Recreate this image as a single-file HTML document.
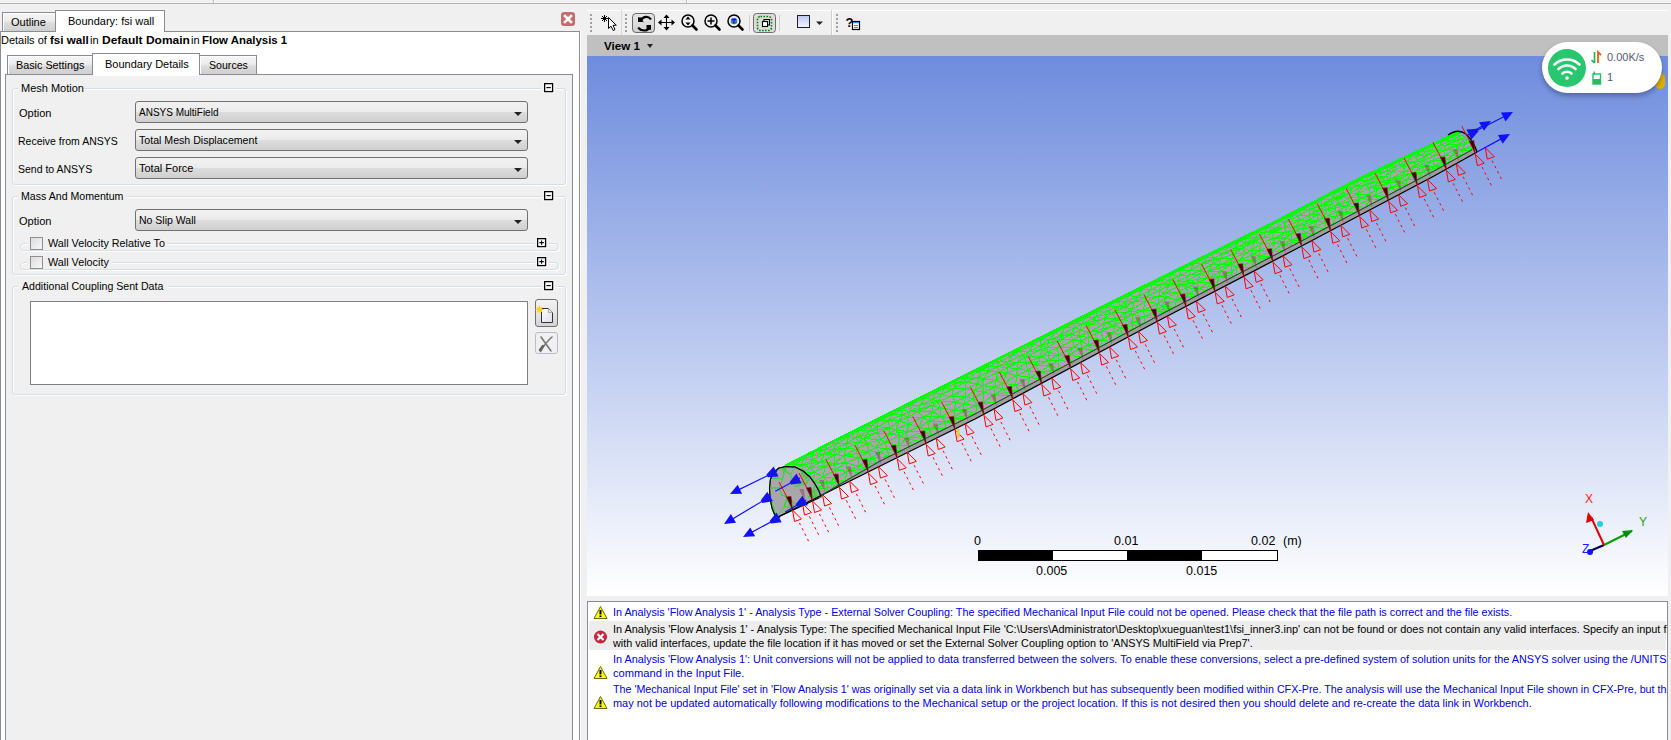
<!DOCTYPE html>
<html><head><meta charset="utf-8">
<style>
*{box-sizing:border-box}
html,body{margin:0;padding:0;width:1671px;height:740px;overflow:hidden;background:#f0f0f0;font-family:"Liberation Sans",sans-serif;font-size:11px;color:#000}
.a{position:absolute}
.t{position:absolute;white-space:nowrap;line-height:13px;font-size:11px}
.tab{position:absolute;border:1px solid #898c95;border-bottom:none;box-shadow:inset 1px 1px 0 #fff;background:linear-gradient(#f6f6f6 0%,#ececec 45%,#dcdcdc 55%,#cfcfcf 100%)}
.tabon{position:absolute;border:1px solid #898c95;border-bottom:none;background:#fff}
.grp{position:absolute;border:1px solid #d3dde6;border-radius:3px;box-shadow:inset 1px 1px 0 #fff,1px 1px 0 #fff}
.combo{position:absolute;border:1px solid #707070;border-radius:3px;background:linear-gradient(#f2f2f2 0%,#ebebeb 48%,#dddddd 52%,#cfcfcf 100%)}
.arr{position:absolute;width:0;height:0;border-left:4px solid transparent;border-right:4px solid transparent;border-top:4px solid #222}
.pm{position:absolute;width:10px;height:10px;border:2px solid #000;background:#fff}
.msg{position:absolute;white-space:nowrap;font-size:10.8px;line-height:14px}
.sc{position:absolute;white-space:nowrap;font-size:12.5px;line-height:14px;color:#000}
.cb{position:absolute;width:13px;height:13px;border:1px solid #8f8f8f;background:linear-gradient(135deg,#dcdcdc,#f7f7f7)}
</style></head>
<body>
<!-- top strip -->
<div class="a" style="left:0;top:3px;width:1671px;height:1px;background:#b3b3b3"></div><div class="a" style="left:0;top:2px;width:1671px;height:1px;background:#f5f5f5"></div>
<div class="a" style="left:213px;top:0;width:1px;height:3px;background:#b8b8b8"></div><div class="a" style="left:214px;top:0;width:1px;height:3px;background:#fff"></div>
<div class="a" style="left:686px;top:0;width:1px;height:3px;background:#b8b8b8"></div><div class="a" style="left:687px;top:0;width:1px;height:3px;background:#fff"></div>

<!-- LEFT PANEL -->
<div class="tab" style="left:2px;top:12px;width:54px;height:19px"></div>
<div class="t" style="left:11px;top:16px;font-size:11px">Outline</div>
<div class="tabon" style="left:55px;top:10px;width:110px;height:22px"></div>
<div class="t" style="left:68px;top:15px;font-size:11px">Boundary: fsi wall</div>
<div class="a" style="left:0;top:31px;width:580px;height:709px;border:1px solid #898c95;border-bottom:none;background:#fff"></div>
<div class="a" style="left:56px;top:31px;width:108px;height:2px;background:#fff"></div>
<div class="t" style="left:1px;top:34px">Details of</div><div class="t" style="left:50px;top:34px;font-weight:bold;transform:scaleX(1.055);transform-origin:0 0">fsi wall</div><div class="t" style="left:90px;top:34px">in</div><div class="t" style="left:101.5px;top:34px;font-weight:bold;transform:scaleX(1.089);transform-origin:0 0">Default Domain</div><div class="t" style="left:191px;top:34px">in</div><div class="t" style="left:202px;top:34px;font-weight:bold;transform:scaleX(1.037);transform-origin:0 0">Flow Analysis 1</div>

<div class="a" style="left:580px;top:31px;width:1px;height:709px;background:#fff"></div>
<!-- close button -->
<div class="a" style="left:561px;top:12px;width:14px;height:14px;border-radius:3px;background:#c56d6d"></div>
<svg class="a" style="left:561px;top:12px" width="14" height="14"><path d="M4 4L10 10M10 4L4 10" stroke="#fff" stroke-width="2.6" stroke-linecap="square"/></svg>

<!-- inner tabs -->
<div class="a" style="left:5px;top:74px;width:568px;height:666px;border:1px solid #898c95;border-bottom:none;background:#f0f0f0"></div>
<div class="tab" style="left:7px;top:55px;width:86px;height:19px"></div>
<div class="t" style="left:16px;top:59px;font-size:10.8px">Basic Settings</div>
<div class="tab" style="left:199px;top:55px;width:58px;height:19px"></div>
<div class="t" style="left:209px;top:59px;font-size:10.6px">Sources</div>
<div class="tabon" style="left:92px;top:53px;width:108px;height:22px"></div>
<div class="a" style="left:93px;top:74px;width:106px;height:2px;background:#fff"></div>
<div class="t" style="left:105px;top:58px;font-size:11px">Boundary Details</div>

<!-- group: Mesh Motion -->
<div class="grp" style="left:12px;top:88px;width:554px;height:97px"></div>
<div class="a" style="left:18px;top:82px;width:66px;height:12px;background:#f0f0f0"></div>
<div class="t" style="left:21px;top:82px;font-size:11px">Mesh Motion</div>
<div class="a" style="left:541px;top:82px;width:15px;height:12px;background:#f0f0f0"></div>
<svg class="a" style="left:543px;top:82px" width="12" height="12"><rect x="0.5" y="0.5" width="10.2" height="10.2" fill="none" stroke="#fff"/><rect x="1.6" y="1.6" width="8" height="8" fill="#fafafa" stroke="#000" stroke-width="1.3"/><path d="M3.4 5.6H7.8" stroke="#000" stroke-width="1.1"/></svg>

<div class="t" style="left:19px;top:107px;font-size:11px">Option</div>
<div class="combo" style="left:135px;top:101px;width:393px;height:22px"></div>
<div class="t" style="left:139px;top:106px;font-size:10px">ANSYS MultiField</div>
<div class="arr" style="left:514px;top:112px"></div>

<div class="t" style="left:18px;top:135px;font-size:10.5px">Receive from ANSYS</div>
<div class="combo" style="left:135px;top:129px;width:393px;height:22px"></div>
<div class="t" style="left:139px;top:134px;font-size:10.6px">Total Mesh Displacement</div>
<div class="arr" style="left:514px;top:140px"></div>

<div class="t" style="left:18px;top:163px;font-size:10.5px">Send to ANSYS</div>
<div class="combo" style="left:135px;top:157px;width:393px;height:22px"></div>
<div class="t" style="left:139px;top:162px;font-size:11px">Total Force</div>
<div class="arr" style="left:514px;top:168px"></div>

<!-- group: Mass And Momentum -->
<div class="grp" style="left:12px;top:196px;width:554px;height:79px"></div>
<div class="a" style="left:18px;top:190px;width:108px;height:12px;background:#f0f0f0"></div>
<div class="t" style="left:21px;top:190px;font-size:10.6px">Mass And Momentum</div>
<div class="a" style="left:541px;top:190px;width:15px;height:12px;background:#f0f0f0"></div>
<svg class="a" style="left:543px;top:190px" width="12" height="12"><rect x="0.5" y="0.5" width="10.2" height="10.2" fill="none" stroke="#fff"/><rect x="1.6" y="1.6" width="8" height="8" fill="#fafafa" stroke="#000" stroke-width="1.3"/><path d="M3.4 5.6H7.8" stroke="#000" stroke-width="1.1"/></svg>

<div class="t" style="left:19px;top:215px;font-size:11px">Option</div>
<div class="combo" style="left:135px;top:209px;width:393px;height:22px"></div>
<div class="t" style="left:139px;top:214px;font-size:10.5px">No Slip Wall</div>
<div class="arr" style="left:514px;top:220px"></div>

<div class="grp" style="left:20px;top:243px;width:539px;height:8px;border-radius:4px"></div>
<div class="a" style="left:27px;top:236px;width:140px;height:10px;background:#f0f0f0"></div>
<div class="cb" style="left:30px;top:237px"></div>
<div class="t" style="left:48px;top:237px;font-size:10.8px">Wall Velocity Relative To</div>
<div class="a" style="left:534px;top:236px;width:15px;height:12px;background:#f0f0f0"></div>
<svg class="a" style="left:536px;top:237px" width="12" height="12"><rect x="0.5" y="0.5" width="10.2" height="10.2" fill="none" stroke="#fff"/><rect x="1.6" y="1.6" width="8" height="8" fill="#fafafa" stroke="#000" stroke-width="1.3"/><path d="M3.4 5.6H7.8M5.6 3.4V7.8" stroke="#000" stroke-width="1.1"/></svg>

<div class="grp" style="left:20px;top:262px;width:539px;height:8px;border-radius:4px"></div>
<div class="a" style="left:27px;top:255px;width:85px;height:10px;background:#f0f0f0"></div>
<div class="cb" style="left:30px;top:256px"></div>
<div class="t" style="left:48px;top:256px;font-size:10.8px">Wall Velocity</div>
<div class="a" style="left:534px;top:255px;width:15px;height:12px;background:#f0f0f0"></div>
<svg class="a" style="left:536px;top:256px" width="12" height="12"><rect x="0.5" y="0.5" width="10.2" height="10.2" fill="none" stroke="#fff"/><rect x="1.6" y="1.6" width="8" height="8" fill="#fafafa" stroke="#000" stroke-width="1.3"/><path d="M3.4 5.6H7.8M5.6 3.4V7.8" stroke="#000" stroke-width="1.1"/></svg>

<!-- group: Additional Coupling Sent Data -->
<div class="grp" style="left:12px;top:286px;width:554px;height:109px"></div>
<div class="a" style="left:18px;top:280px;width:150px;height:12px;background:#f0f0f0"></div>
<div class="t" style="left:22px;top:280px;font-size:10.6px">Additional Coupling Sent Data</div>
<div class="a" style="left:541px;top:280px;width:15px;height:12px;background:#f0f0f0"></div>
<svg class="a" style="left:543px;top:280px" width="12" height="12"><rect x="0.5" y="0.5" width="10.2" height="10.2" fill="none" stroke="#fff"/><rect x="1.6" y="1.6" width="8" height="8" fill="#fafafa" stroke="#000" stroke-width="1.3"/><path d="M3.4 5.6H7.8" stroke="#000" stroke-width="1.1"/></svg>
<div class="a" style="left:30px;top:301px;width:498px;height:84px;border:1px solid #7a7f88;background:#fff"></div>
<div class="a" style="left:535px;top:299px;width:23px;height:28px;border:1px solid #6f6f6f;border-radius:3px;background:linear-gradient(#f2f2f2 0%,#e6e6e6 50%,#d4d4d4 100%)"></div>
<div class="a" style="left:535px;top:332px;width:23px;height:22px;border:1px solid #b9bec4;border-radius:3px;background:#f0f0f0"></div>

<svg class="a" style="left:535px;top:299px" width="24" height="56" viewBox="535 299 24 56">
 <defs><linearGradient id="pg" x1="0" y1="0" x2="1" y2="1"><stop offset="0" stop-color="#ffffff"/><stop offset="1" stop-color="#dcdcf0"/></linearGradient></defs>
 <path d="M541.5 308.5 H548.5 L552.5 312.5 V322.5 H541.5 Z" fill="url(#pg)" stroke="#333" stroke-width="1"/>
 <path d="M548.5 308.5 V312.5 H552.5" fill="#eee" stroke="#999" stroke-width="0.8"/>
 <circle cx="539.5" cy="309.5" r="2.6" fill="#ffe000"/>
 <path d="M539.5 305.5V313.5M535.5 309.5H543.5M536.7 306.7L542.3 312.3M542.3 306.7L536.7 312.3" stroke="#ffd000" stroke-width="0.9"/>
 <path d="M541 337 L551 351 M552 337 Q546 342 540.5 351.5" stroke="#777" stroke-width="1.6" fill="none" stroke-linecap="round"/>
 <path d="M540 350 L543 346" stroke="#666" stroke-width="2.6" stroke-linecap="round"/>
</svg>
<!-- RIGHT AREA -->
<div class="a" style="left:587px;top:10px;width:1081px;height:1px;background:#fff"></div>

<!-- toolbar -->
<svg class="a" style="left:587px;top:10px" width="290" height="26" viewBox="587 10 290 26">
 <g fill="#a0a0a0"><rect x="590" y="14" width="2" height="2"/><rect x="590" y="18" width="2" height="2"/><rect x="590" y="22" width="2" height="2"/><rect x="590" y="26" width="2" height="2"/><rect x="590" y="30" width="2" height="2"/>
 <rect x="625" y="14" width="2" height="2"/><rect x="625" y="18" width="2" height="2"/><rect x="625" y="22" width="2" height="2"/><rect x="625" y="26" width="2" height="2"/><rect x="625" y="30" width="2" height="2"/>
 <rect x="836" y="14" width="2" height="2"/><rect x="836" y="18" width="2" height="2"/><rect x="836" y="22" width="2" height="2"/><rect x="836" y="26" width="2" height="2"/><rect x="836" y="30" width="2" height="2"/></g>
 <rect x="621" y="10" width="1" height="25" fill="#d8d8d8"/>
 <rect x="831" y="10" width="1" height="25" fill="#cfcfcf"/><rect x="832" y="10" width="1" height="25" fill="#ffffff"/>
 <rect x="749" y="15" width="1" height="16" fill="#d0d0d0"/>
 <rect x="779" y="15" width="1" height="16" fill="#d0d0d0"/>
 <!-- select -->
 <g shape-rendering="crispEdges" fill="#000"><rect x="604" y="15" width="1" height="7"/><rect x="601" y="18" width="7" height="1"/><rect x="602" y="16" width="1" height="1"/><rect x="603" y="17" width="1" height="1"/><rect x="606" y="16" width="1" height="1"/><rect x="605" y="17" width="1" height="1"/><rect x="602" y="20" width="1" height="1"/><rect x="603" y="19" width="1" height="1"/><rect x="606" y="20" width="1" height="1"/><rect x="605" y="19" width="1" height="1"/><rect x="603" y="17" width="3" height="3"/></g>
 <path d="M608.5 17.5 L608.5 28.5 L611 26.2 L613.2 30.5 L615 29.6 L613 25.3 L616.3 25.2 Z" fill="#fff" stroke="#000" stroke-width="1"/>
 <!-- rotate pressed -->
 <defs><linearGradient id="pbg" x1="0" y1="0" x2="0" y2="1"><stop offset="0" stop-color="#e6e6e6"/><stop offset="0.5" stop-color="#dedede"/><stop offset="1" stop-color="#cfcfcf"/></linearGradient></defs>
 <rect x="632.5" y="13.5" width="22" height="19" rx="3.5" fill="url(#pbg)" stroke="#6a6a6a"/>
 <path d="M641 20.5 Q643 16.5 646.5 16.8 Q649.5 17 651 19.5" stroke="#000" stroke-width="2.2" fill="none"/>
 <path d="M638 17.5 H642.5 V22 H638 Z" fill="#000"/><path d="M638 17.5 L643.5 22" stroke="#000" stroke-width="1"/>
 <path d="M638.2 27.5 Q640 30.5 644.5 30.5 Q648 30.5 649.5 27" stroke="#000" stroke-width="2.2" fill="none"/>
 <path d="M646.5 25 H651 V29.8 H646.5 Z" fill="#000"/>
 <!-- pan -->
 <path d="M666.5 15.5V29.5M659 22.5H674" stroke="#000" stroke-width="1.1"/>
 <path d="M666.5 14.5L663.5 18H669.5Z M666.5 30.5L663.5 27H669.5Z M658 22.5L661.5 19.5V25.5Z M675 22.5L671.5 19.5V25.5Z" fill="#000"/>
 <!-- zoom icons -->
 <g fill="none" stroke="#000" stroke-width="1.5"><circle cx="688" cy="21" r="6"/><circle cx="711" cy="21" r="6"/><circle cx="734" cy="21" r="6"/></g>
 <g stroke="#000" stroke-width="2.6" stroke-linecap="round"><path d="M692.5 25.5L696.5 29.5M715.5 25.5L719.5 29.5M738.5 25.5L742.5 29.5"/></g>
 <path d="M688 16.5L685.5 19.5H690.5Z M688 25.5L685.5 22.5H690.5Z" fill="#000"/>
 <path d="M711 17.5V24.5M707.5 21H714.5" stroke="#000" stroke-width="1.5"/>
 <circle cx="734" cy="21" r="3.3" fill="#3a78e0"/><path d="M732 19.5H736M734 19.5V23.5" stroke="#102050" stroke-width="1.2"/>
 <!-- fit pressed -->
 <rect x="753.5" y="13.5" width="22" height="19" rx="3" fill="#dcdcdc" stroke="#6c6c6c"/>
 <rect x="757.5" y="16.5" width="14" height="14" rx="3" fill="none" stroke="#008000" stroke-width="1.6" stroke-dasharray="1.6 1.4"/>
 <rect x="762.5" y="21.5" width="5" height="5" fill="#fff" stroke="#000" stroke-width="1.1"/>
 <path d="M764 21.5V19.5H769.5V25H767.5" fill="none" stroke="#000" stroke-width="1.1"/>
 <!-- color square -->
 <defs><linearGradient id="bsq" x1="0" y1="0" x2="0" y2="1"><stop offset="0" stop-color="#b8c8f0"/><stop offset="1" stop-color="#f4f6ff"/></linearGradient></defs>
 <rect x="797.5" y="15.5" width="12" height="12" fill="url(#bsq)" stroke="#202020"/>
 <path d="M816 21.5H823L819.5 25Z" fill="#222"/>
 <!-- help -->
 <text x="845.5" y="26.5" font-family="Liberation Sans" font-weight="bold" font-size="13" fill="#000">?</text>
 <rect x="852.5" y="21.5" width="7" height="8" fill="#fff" stroke="#000" stroke-width="1.2"/>
 <rect x="853" y="22" width="6" height="1.2" fill="#1e90ff"/>
 <path d="M854 25.5H858M854 27.5H858" stroke="#555" stroke-width="0.8"/>
</svg>
<div class="a" style="left:587px;top:35px;width:1081px;height:21px;background:#c0c0c0"></div>
<div class="t" style="left:604px;top:39px;font-weight:bold;font-size:11.6px">View 1</div>
<div class="arr" style="left:647px;top:44px;border-left-width:3.5px;border-right-width:3.5px;border-top-width:4px"></div>
<div id="vp" class="a" style="left:587px;top:56px;width:1081px;height:540px;background:linear-gradient(#6e8cde 0%,#ffffff 100%)"></div>
<!--MODEL--><svg class="a" style="left:587px;top:56px" width="1081" height="540" viewBox="587 56 1081 540"><polygon points="783.0,467.0 870.0,422.0 1000.0,357.0 1156.0,279.3 1267.0,225.0 1361.0,177.0 1455.0,133.0 1462.0,134.0 1472.0,142.0 1477.0,152.0 1477.0,152.0 1434.0,176.0 1294.0,250.0 1156.0,322.0 975.0,419.0 850.0,481.0 776.0,518.0 771.0,505.0 769.0,492.0 771.0,480.0 777.0,471.0" fill="#a9a6ae"/><polygon points="821.0,495.5 835.0,487.2 850.0,478.4 880.0,461.1 920.0,441.3 975.0,414.0 1156.0,317.0 1294.0,245.0 1434.0,171.0 1472.0,149.8 1477.0,152.0 1434.0,176.0 1294.0,250.0 1156.0,322.0 975.0,419.0 850.0,481.0 821.0,495.5" fill="#9c9ba0"/><path d="M785.0 465.0L793.2 460.9 M785.0 465.0L793.4 464.7 M785.0 465.0L803.8 458.8 M793.4 464.7L803.8 458.8 M793.4 464.7L791.6 470.6 M793.4 464.7L801.8 465.0 M791.6 470.6L801.8 465.0 M791.6 470.6L802.7 472.6 M802.7 472.6L810.5 467.7 M802.7 472.6L801.4 478.9 M802.7 472.6L814.2 472.1 M802.7 472.6L814.2 472.1 M801.4 478.9L814.2 472.1 M801.4 478.9L813.7 481.8 M813.7 481.8L823.0 477.0 M813.7 481.8L814.2 489.7 M813.7 481.8L828.1 482.6 M814.2 489.7L828.1 482.6 M814.2 489.7L826.3 492.4 M814.2 489.7L836.3 486.5 M826.3 492.4L836.3 486.5 M793.2 460.9L809.6 452.5 M793.2 460.9L803.8 458.8 M793.2 460.9L793.4 464.7 M803.8 458.8L813.1 455.7 M803.8 458.8L801.8 465.0 M803.8 458.8L811.9 460.0 M803.8 458.8L811.9 460.0 M801.8 465.0L811.9 460.0 M801.8 465.0L810.5 467.7 M801.8 465.0L802.7 472.6 M801.8 465.0L821.2 461.7 M810.5 467.7L821.2 461.7 M810.5 467.7L814.2 472.1 M810.5 467.7L825.0 466.4 M810.5 467.7L825.0 466.4 M814.2 472.1L825.0 466.4 M814.2 472.1L823.0 477.0 M814.2 472.1L813.7 481.8 M823.0 477.0L835.9 469.8 M823.0 477.0L828.1 482.6 M823.0 477.0L835.2 478.4 M828.1 482.6L835.2 478.4 M828.1 482.6L836.3 486.5 M828.1 482.6L826.3 492.4 M828.1 482.6L844.9 481.4 M836.3 486.5L844.9 481.4 M809.6 452.5L814.9 449.9 M809.6 452.5L813.1 455.7 M809.6 452.5L803.8 458.8 M809.6 452.5L824.6 449.4 M813.1 455.7L824.6 449.4 M813.1 455.7L811.9 460.0 M813.1 455.7L823.9 454.2 M813.1 455.7L823.9 454.2 M811.9 460.0L823.9 454.2 M811.9 460.0L821.2 461.7 M811.9 460.0L810.5 467.7 M821.2 461.7L835.1 454.7 M821.2 461.7L825.0 466.4 M821.2 461.7L834.1 463.4 M821.2 461.7L834.1 463.4 M825.0 466.4L834.1 463.4 M825.0 466.4L835.9 469.8 M825.0 466.4L823.0 477.0 M825.0 466.4L846.2 462.7 M835.9 469.8L846.2 462.7 M835.9 469.8L835.2 478.4 M835.9 469.8L847.0 471.5 M835.9 469.8L847.0 471.5 M835.2 478.4L847.0 471.5 M835.2 478.4L844.9 481.4 M835.2 478.4L836.3 486.5 M844.9 481.4L860.3 472.4 M814.9 449.9L829.8 442.3 M814.9 449.9L824.6 449.4 M814.9 449.9L813.1 455.7 M824.6 449.4L836.4 444.0 M824.6 449.4L823.9 454.2 M824.6 449.4L833.0 449.7 M824.6 449.4L833.0 449.7 M823.9 454.2L833.0 449.7 M823.9 454.2L835.1 454.7 M823.9 454.2L821.2 461.7 M823.9 454.2L846.3 448.0 M835.1 454.7L846.3 448.0 M835.1 454.7L834.1 463.4 M835.1 454.7L844.1 455.5 M834.1 463.4L844.1 455.5 M834.1 463.4L846.2 462.7 M834.1 463.4L835.9 469.8 M846.2 462.7L858.1 457.9 M846.2 462.7L847.0 471.5 M846.2 462.7L858.5 466.2 M847.0 471.5L858.5 466.2 M847.0 471.5L860.3 472.4 M847.0 471.5L844.9 481.4 M847.0 471.5L867.5 468.1 M860.3 472.4L867.5 468.1 M829.8 442.3L840.5 436.9 M829.8 442.3L836.4 444.0 M829.8 442.3L824.6 449.4 M829.8 442.3L848.5 437.0 M836.4 444.0L848.5 437.0 M836.4 444.0L833.0 449.7 M836.4 444.0L846.6 443.6 M833.0 449.7L846.6 443.6 M833.0 449.7L846.3 448.0 M833.0 449.7L835.1 454.7 M846.3 448.0L858.8 442.3 M846.3 448.0L844.1 455.5 M846.3 448.0L856.0 449.2 M846.3 448.0L856.0 449.2 M844.1 455.5L856.0 449.2 M844.1 455.5L858.1 457.9 M844.1 455.5L846.2 462.7 M844.1 455.5L868.6 451.8 M858.1 457.9L868.6 451.8 M858.1 457.9L858.5 466.2 M858.1 457.9L871.5 458.6 M858.5 466.2L871.5 458.6 M858.5 466.2L867.5 468.1 M858.5 466.2L860.3 472.4 M858.5 466.2L877.9 462.2 M867.5 468.1L877.9 462.2 M840.5 436.9L849.4 432.4 M840.5 436.9L848.5 437.0 M840.5 436.9L836.4 444.0 M848.5 437.0L858.9 430.7 M848.5 437.0L846.6 443.6 M848.5 437.0L856.2 437.1 M846.6 443.6L856.2 437.1 M846.6 443.6L858.8 442.3 M846.6 443.6L846.3 448.0 M858.8 442.3L863.7 438.7 M858.8 442.3L856.0 449.2 M858.8 442.3L867.5 443.5 M856.0 449.2L867.5 443.5 M856.0 449.2L868.6 451.8 M856.0 449.2L858.1 457.9 M868.6 451.8L875.9 447.3 M868.6 451.8L871.5 458.6 M868.6 451.8L879.4 452.1 M871.5 458.6L879.4 452.1 M871.5 458.6L877.9 462.2 M871.5 458.6L867.5 468.1 M871.5 458.6L889.5 456.4 M877.9 462.2L889.5 456.4 M849.4 432.4L861.3 426.4 M849.4 432.4L858.9 430.7 M849.4 432.4L848.5 437.0 M858.9 430.7L872.3 425.5 M858.9 430.7L856.2 437.1 M858.9 430.7L869.7 430.6 M858.9 430.7L869.7 430.6 M856.2 437.1L869.7 430.6 M856.2 437.1L863.7 438.7 M856.2 437.1L858.8 442.3 M856.2 437.1L876.9 432.9 M863.7 438.7L876.9 432.9 M863.7 438.7L867.5 443.5 M863.7 438.7L880.9 439.4 M867.5 443.5L880.9 439.4 M867.5 443.5L875.9 447.3 M867.5 443.5L868.6 451.8 M875.9 447.3L885.5 441.8 M875.9 447.3L879.4 452.1 M875.9 447.3L886.7 449.0 M879.4 452.1L886.7 449.0 M879.4 452.1L889.5 456.4 M879.4 452.1L877.9 462.2 M889.5 456.4L900.3 451.1 M861.3 426.4L872.4 420.8 M861.3 426.4L872.3 425.5 M861.3 426.4L858.9 430.7 M872.3 425.5L878.1 421.0 M872.3 425.5L869.7 430.6 M872.3 425.5L877.9 426.6 M869.7 430.6L877.9 426.6 M869.7 430.6L876.9 432.9 M869.7 430.6L863.7 438.7 M869.7 430.6L889.9 428.1 M876.9 432.9L889.9 428.1 M876.9 432.9L880.9 439.4 M876.9 432.9L889.4 433.8 M876.9 432.9L889.4 433.8 M880.9 439.4L889.4 433.8 M880.9 439.4L885.5 441.8 M880.9 439.4L875.9 447.3 M885.5 441.8L900.2 436.1 M885.5 441.8L886.7 449.0 M885.5 441.8L898.0 445.7 M886.7 449.0L898.0 445.7 M886.7 449.0L900.3 451.1 M886.7 449.0L889.5 456.4 M900.3 451.1L912.6 445.0 M872.4 420.8L885.0 414.5 M872.4 420.8L878.1 421.0 M872.4 420.8L872.3 425.5 M872.4 420.8L892.8 414.4 M878.1 421.0L892.8 414.4 M878.1 421.0L877.9 426.6 M878.1 421.0L888.1 420.9 M877.9 426.6L888.1 420.9 M877.9 426.6L889.9 428.1 M877.9 426.6L876.9 432.9 M889.9 428.1L899.2 421.0 M889.9 428.1L889.4 433.8 M889.9 428.1L895.6 429.7 M889.4 433.8L895.6 429.7 M889.4 433.8L900.2 436.1 M889.4 433.8L885.5 441.8 M889.4 433.8L907.3 431.5 M900.2 436.1L907.3 431.5 M900.2 436.1L898.0 445.7 M900.2 436.1L906.3 438.5 M900.2 436.1L906.3 438.5 M898.0 445.7L906.3 438.5 M898.0 445.7L912.6 445.0 M898.0 445.7L900.3 451.1 M912.6 445.0L919.4 441.6 M885.0 414.5L891.1 411.4 M885.0 414.5L892.8 414.4 M885.0 414.5L878.1 421.0 M892.8 414.4L900.4 409.8 M892.8 414.4L888.1 420.9 M892.8 414.4L902.7 414.8 M892.8 414.4L902.7 414.8 M888.1 420.9L902.7 414.8 M888.1 420.9L899.2 421.0 M888.1 420.9L889.9 428.1 M899.2 421.0L907.4 417.4 M899.2 421.0L895.6 429.7 M899.2 421.0L908.4 423.8 M895.6 429.7L908.4 423.8 M895.6 429.7L907.3 431.5 M895.6 429.7L900.2 436.1 M907.3 431.5L919.0 427.3 M907.3 431.5L906.3 438.5 M907.3 431.5L923.7 431.4 M907.3 431.5L923.7 431.4 M906.3 438.5L923.7 431.4 M906.3 438.5L919.4 441.6 M906.3 438.5L912.6 445.0 M906.3 438.5L932.0 435.3 M919.4 441.6L932.0 435.3 M891.1 411.4L901.9 406.1 M891.1 411.4L900.4 409.8 M891.1 411.4L892.8 414.4 M900.4 409.8L910.1 405.6 M900.4 409.8L902.7 414.8 M900.4 409.8L910.2 411.6 M902.7 414.8L910.2 411.6 M902.7 414.8L907.4 417.4 M902.7 414.8L899.2 421.0 M907.4 417.4L917.8 411.6 M907.4 417.4L908.4 423.8 M907.4 417.4L923.1 417.0 M907.4 417.4L923.1 417.0 M908.4 423.8L923.1 417.0 M908.4 423.8L919.0 427.3 M908.4 423.8L907.3 431.5 M919.0 427.3L929.1 421.3 M919.0 427.3L923.7 431.4 M919.0 427.3L928.7 429.1 M923.7 431.4L928.7 429.1 M923.7 431.4L932.0 435.3 M923.7 431.4L919.4 441.6 M932.0 435.3L945.5 428.6 M901.9 406.1L917.5 398.3 M901.9 406.1L910.1 405.6 M901.9 406.1L900.4 409.8 M910.1 405.6L924.5 398.3 M910.1 405.6L910.2 411.6 M910.1 405.6L920.5 404.9 M910.2 411.6L920.5 404.9 M910.2 411.6L917.8 411.6 M910.2 411.6L907.4 417.4 M910.2 411.6L933.3 405.3 M917.8 411.6L933.3 405.3 M917.8 411.6L923.1 417.0 M917.8 411.6L932.4 411.8 M923.1 417.0L932.4 411.8 M923.1 417.0L929.1 421.3 M923.1 417.0L919.0 427.3 M923.1 417.0L940.9 416.4 M929.1 421.3L940.9 416.4 M929.1 421.3L928.7 429.1 M929.1 421.3L945.9 421.7 M928.7 429.1L945.9 421.7 M928.7 429.1L945.5 428.6 M928.7 429.1L932.0 435.3 M945.5 428.6L955.1 423.9 M917.5 398.3L928.0 393.0 M917.5 398.3L924.5 398.3 M917.5 398.3L910.1 405.6 M924.5 398.3L935.5 392.7 M924.5 398.3L920.5 404.9 M924.5 398.3L932.5 399.4 M924.5 398.3L932.5 399.4 M920.5 404.9L932.5 399.4 M920.5 404.9L933.3 405.3 M920.5 404.9L917.8 411.6 M920.5 404.9L938.5 401.3 M933.3 405.3L938.5 401.3 M933.3 405.3L932.4 411.8 M933.3 405.3L939.9 407.8 M932.4 411.8L939.9 407.8 M932.4 411.8L940.9 416.4 M932.4 411.8L929.1 421.3 M940.9 416.4L954.7 410.0 M940.9 416.4L945.9 421.7 M940.9 416.4L953.5 418.2 M945.9 421.7L953.5 418.2 M945.9 421.7L955.1 423.9 M945.9 421.7L945.5 428.6 M945.9 421.7L966.7 418.1 M955.1 423.9L966.7 418.1 M928.0 393.0L939.7 387.1 M928.0 393.0L935.5 392.7 M928.0 393.0L924.5 398.3 M928.0 393.0L944.1 388.4 M935.5 392.7L944.1 388.4 M935.5 392.7L932.5 399.4 M935.5 392.7L941.3 394.6 M932.5 399.4L941.3 394.6 M932.5 399.4L938.5 401.3 M932.5 399.4L933.3 405.3 M938.5 401.3L951.6 396.4 M938.5 401.3L939.9 407.8 M938.5 401.3L955.7 401.7 M938.5 401.3L955.7 401.7 M939.9 407.8L955.7 401.7 M939.9 407.8L954.7 410.0 M939.9 407.8L940.9 416.4 M954.7 410.0L963.4 404.6 M954.7 410.0L953.5 418.2 M954.7 410.0L964.1 410.0 M953.5 418.2L964.1 410.0 M953.5 418.2L966.7 418.1 M953.5 418.2L955.1 423.9 M953.5 418.2L975.4 413.8 M966.7 418.1L975.4 413.8 M939.7 387.1L950.3 381.8 M939.7 387.1L944.1 388.4 M939.7 387.1L935.5 392.7 M944.1 388.4L958.2 382.4 M944.1 388.4L941.3 394.6 M944.1 388.4L953.6 388.4 M944.1 388.4L953.6 388.4 M941.3 394.6L953.6 388.4 M941.3 394.6L951.6 396.4 M941.3 394.6L938.5 401.3 M951.6 396.4L965.3 388.6 M951.6 396.4L955.7 401.7 M951.6 396.4L966.1 396.8 M955.7 401.7L966.1 396.8 M955.7 401.7L963.4 404.6 M955.7 401.7L954.7 410.0 M963.4 404.6L973.0 398.8 M963.4 404.6L964.1 410.0 M963.4 404.6L977.2 405.5 M963.4 404.6L977.2 405.5 M964.1 410.0L977.2 405.5 M964.1 410.0L975.4 413.8 M964.1 410.0L966.7 418.1 M975.4 413.8L983.0 409.7 M950.3 381.8L956.4 378.8 M950.3 381.8L958.2 382.4 M950.3 381.8L944.1 388.4 M958.2 382.4L965.4 379.0 M958.2 382.4L953.6 388.4 M958.2 382.4L966.3 381.9 M953.6 388.4L966.3 381.9 M953.6 388.4L965.3 388.6 M953.6 388.4L951.6 396.4 M965.3 388.6L977.5 384.1 M965.3 388.6L966.1 396.8 M965.3 388.6L974.6 390.5 M966.1 396.8L974.6 390.5 M966.1 396.8L973.0 398.8 M966.1 396.8L963.4 404.6 M973.0 398.8L983.9 392.2 M973.0 398.8L977.2 405.5 M973.0 398.8L982.9 403.3 M973.0 398.8L982.9 403.3 M977.2 405.5L982.9 403.3 M977.2 405.5L983.0 409.7 M977.2 405.5L975.4 413.8 M983.0 409.7L996.5 402.5 M956.4 378.8L969.7 372.2 M956.4 378.8L965.4 379.0 M956.4 378.8L958.2 382.4 M965.4 379.0L980.3 370.6 M965.4 379.0L966.3 381.9 M965.4 379.0L978.7 377.2 M965.4 379.0L978.7 377.2 M966.3 381.9L978.7 377.2 M966.3 381.9L977.5 384.1 M966.3 381.9L965.3 388.6 M977.5 384.1L983.2 379.3 M977.5 384.1L974.6 390.5 M977.5 384.1L982.9 385.9 M974.6 390.5L982.9 385.9 M974.6 390.5L983.9 392.2 M974.6 390.5L973.0 398.8 M983.9 392.2L995.1 386.7 M983.9 392.2L982.9 403.3 M983.9 392.2L993.9 394.6 M983.9 392.2L993.9 394.6 M982.9 403.3L993.9 394.6 M982.9 403.3L996.5 402.5 M982.9 403.3L983.0 409.7 M996.5 402.5L1008.6 396.0 M969.7 372.2L979.5 367.3 M969.7 372.2L980.3 370.6 M969.7 372.2L965.4 379.0 M969.7 372.2L988.5 366.8 M980.3 370.6L988.5 366.8 M980.3 370.6L978.7 377.2 M980.3 370.6L989.0 371.0 M980.3 370.6L989.0 371.0 M978.7 377.2L989.0 371.0 M978.7 377.2L983.2 379.3 M978.7 377.2L977.5 384.1 M983.2 379.3L998.7 372.0 M983.2 379.3L982.9 385.9 M983.2 379.3L995.7 380.1 M983.2 379.3L995.7 380.1 M982.9 385.9L995.7 380.1 M982.9 385.9L995.1 386.7 M982.9 385.9L983.9 392.2 M995.1 386.7L1002.8 383.3 M995.1 386.7L993.9 394.6 M995.1 386.7L1002.8 389.5 M993.9 394.6L1002.8 389.5 M993.9 394.6L1008.6 396.0 M993.9 394.6L996.5 402.5 M993.9 394.6L1018.5 390.7 M1008.6 396.0L1018.5 390.7 M979.5 367.3L989.3 362.4 M979.5 367.3L988.5 366.8 M979.5 367.3L980.3 370.6 M988.5 366.8L999.6 361.5 M988.5 366.8L989.0 371.0 M988.5 366.8L997.5 366.5 M988.5 366.8L997.5 366.5 M989.0 371.0L997.5 366.5 M989.0 371.0L998.7 372.0 M989.0 371.0L983.2 379.3 M998.7 372.0L1007.1 367.8 M998.7 372.0L995.7 380.1 M998.7 372.0L1007.0 373.0 M995.7 380.1L1007.0 373.0 M995.7 380.1L1002.8 383.3 M995.7 380.1L995.1 386.7 M1002.8 383.3L1016.3 375.6 M1002.8 383.3L1002.8 389.5 M1002.8 383.3L1015.9 385.2 M1002.8 383.3L1015.9 385.2 M1002.8 389.5L1015.9 385.2 M1002.8 389.5L1018.5 390.7 M1002.8 389.5L1008.6 396.0 M1018.5 390.7L1027.4 385.9 M989.3 362.4L1002.5 355.8 M989.3 362.4L999.6 361.5 M989.3 362.4L988.5 366.8 M999.6 361.5L1012.4 355.4 M999.6 361.5L997.5 366.5 M999.6 361.5L1008.1 361.8 M997.5 366.5L1008.1 361.8 M997.5 366.5L1007.1 367.8 M997.5 366.5L998.7 372.0 M997.5 366.5L1017.7 362.3 M1007.1 367.8L1017.7 362.3 M1007.1 367.8L1007.0 373.0 M1007.1 367.8L1017.9 368.4 M1007.0 373.0L1017.9 368.4 M1007.0 373.0L1016.3 375.6 M1007.0 373.0L1002.8 383.3 M1016.3 375.6L1027.3 370.6 M1016.3 375.6L1015.9 385.2 M1016.3 375.6L1030.3 377.3 M1015.9 385.2L1030.3 377.3 M1015.9 385.2L1027.4 385.9 M1015.9 385.2L1018.5 390.7 M1027.4 385.9L1040.1 379.1 M1002.5 355.8L1015.6 349.2 M1002.5 355.8L1012.4 355.4 M1002.5 355.8L999.6 361.5 M1002.5 355.8L1019.7 351.1 M1012.4 355.4L1019.7 351.1 M1012.4 355.4L1008.1 361.8 M1012.4 355.4L1022.3 355.1 M1008.1 361.8L1022.3 355.1 M1008.1 361.8L1017.7 362.3 M1008.1 361.8L1007.1 367.8 M1017.7 362.3L1025.5 357.3 M1017.7 362.3L1017.9 368.4 M1017.7 362.3L1026.3 363.0 M1017.9 368.4L1026.3 363.0 M1017.9 368.4L1027.3 370.6 M1017.9 368.4L1016.3 375.6 M1027.3 370.6L1035.4 365.1 M1027.3 370.6L1030.3 377.3 M1027.3 370.6L1039.5 372.7 M1027.3 370.6L1039.5 372.7 M1030.3 377.3L1039.5 372.7 M1030.3 377.3L1040.1 379.1 M1030.3 377.3L1027.4 385.9 M1040.1 379.1L1050.8 373.4 M1015.6 349.2L1021.7 346.2 M1015.6 349.2L1019.7 351.1 M1015.6 349.2L1012.4 355.4 M1019.7 351.1L1033.4 344.4 M1019.7 351.1L1022.3 355.1 M1019.7 351.1L1028.3 352.2 M1019.7 351.1L1028.3 352.2 M1022.3 355.1L1028.3 352.2 M1022.3 355.1L1025.5 357.3 M1022.3 355.1L1017.7 362.3 M1025.5 357.3L1041.5 349.4 M1025.5 357.3L1026.3 363.0 M1025.5 357.3L1040.8 356.4 M1026.3 363.0L1040.8 356.4 M1026.3 363.0L1035.4 365.1 M1026.3 363.0L1027.3 370.6 M1026.3 363.0L1049.6 360.6 M1035.4 365.1L1049.6 360.6 M1035.4 365.1L1039.5 372.7 M1035.4 365.1L1049.6 365.3 M1039.5 372.7L1049.6 365.3 M1039.5 372.7L1050.8 373.4 M1039.5 372.7L1040.1 379.1 M1039.5 372.7L1058.7 369.2 M1050.8 373.4L1058.7 369.2 M1021.7 346.2L1034.8 339.7 M1021.7 346.2L1033.4 344.4 M1021.7 346.2L1019.7 351.1 M1033.4 344.4L1041.4 339.5 M1033.4 344.4L1028.3 352.2 M1033.4 344.4L1039.9 345.9 M1033.4 344.4L1039.9 345.9 M1028.3 352.2L1039.9 345.9 M1028.3 352.2L1041.5 349.4 M1028.3 352.2L1025.5 357.3 M1041.5 349.4L1047.2 347.4 M1041.5 349.4L1040.8 356.4 M1041.5 349.4L1047.7 351.8 M1040.8 356.4L1047.7 351.8 M1040.8 356.4L1049.6 360.6 M1040.8 356.4L1035.4 365.1 M1040.8 356.4L1058.5 354.8 M1049.6 360.6L1058.5 354.8 M1049.6 360.6L1049.6 365.3 M1049.6 360.6L1058.1 360.5 M1049.6 360.6L1058.1 360.5 M1049.6 365.3L1058.1 360.5 M1049.6 365.3L1058.7 369.2 M1049.6 365.3L1050.8 373.4 M1058.7 369.2L1072.5 361.7 M1034.8 339.7L1047.3 333.5 M1034.8 339.7L1041.4 339.5 M1034.8 339.7L1033.4 344.4 M1034.8 339.7L1055.9 332.1 M1041.4 339.5L1055.9 332.1 M1041.4 339.5L1039.9 345.9 M1041.4 339.5L1049.3 339.7 M1041.4 339.5L1049.3 339.7 M1039.9 345.9L1049.3 339.7 M1039.9 345.9L1047.2 347.4 M1039.9 345.9L1041.5 349.4 M1039.9 345.9L1062.0 339.1 M1047.2 347.4L1062.0 339.1 M1047.2 347.4L1047.7 351.8 M1047.2 347.4L1057.4 348.0 M1047.2 347.4L1057.4 348.0 M1047.7 351.8L1057.4 348.0 M1047.7 351.8L1058.5 354.8 M1047.7 351.8L1049.6 360.6 M1058.5 354.8L1073.1 347.8 M1058.5 354.8L1058.1 360.5 M1058.5 354.8L1067.4 355.8 M1058.1 360.5L1067.4 355.8 M1058.1 360.5L1072.5 361.7 M1058.1 360.5L1058.7 369.2 M1072.5 361.7L1082.7 356.3 M1047.3 333.5L1056.8 328.7 M1047.3 333.5L1055.9 332.1 M1047.3 333.5L1041.4 339.5 M1047.3 333.5L1065.1 327.5 M1055.9 332.1L1065.1 327.5 M1055.9 332.1L1049.3 339.7 M1055.9 332.1L1059.9 335.8 M1049.3 339.7L1059.9 335.8 M1049.3 339.7L1062.0 339.1 M1049.3 339.7L1047.2 347.4 M1049.3 339.7L1070.3 334.4 M1062.0 339.1L1070.3 334.4 M1062.0 339.1L1057.4 348.0 M1062.0 339.1L1073.4 340.3 M1057.4 348.0L1073.4 340.3 M1057.4 348.0L1073.1 347.8 M1057.4 348.0L1058.5 354.8 M1073.1 347.8L1081.5 341.1 M1073.1 347.8L1067.4 355.8 M1073.1 347.8L1081.4 348.2 M1067.4 355.8L1081.4 348.2 M1067.4 355.8L1082.7 356.3 M1067.4 355.8L1072.5 361.7 M1082.7 356.3L1093.0 350.8 M1056.8 328.7L1066.9 323.7 M1056.8 328.7L1065.1 327.5 M1056.8 328.7L1055.9 332.1 M1065.1 327.5L1074.3 323.6 M1065.1 327.5L1059.9 335.8 M1065.1 327.5L1075.3 327.1 M1059.9 335.8L1075.3 327.1 M1059.9 335.8L1070.3 334.4 M1059.9 335.8L1062.0 339.1 M1070.3 334.4L1080.1 330.5 M1070.3 334.4L1073.4 340.3 M1070.3 334.4L1078.8 336.0 M1070.3 334.4L1078.8 336.0 M1073.4 340.3L1078.8 336.0 M1073.4 340.3L1081.5 341.1 M1073.4 340.3L1073.1 347.8 M1081.5 341.1L1088.3 337.5 M1081.5 341.1L1081.4 348.2 M1081.5 341.1L1088.7 345.1 M1081.4 348.2L1088.7 345.1 M1081.4 348.2L1093.0 350.8 M1081.4 348.2L1082.7 356.3 M1093.0 350.8L1100.2 346.9 M1066.9 323.7L1079.7 317.3 M1066.9 323.7L1074.3 323.6 M1066.9 323.7L1065.1 327.5 M1074.3 323.6L1084.8 318.3 M1074.3 323.6L1075.3 327.1 M1074.3 323.6L1081.7 324.0 M1074.3 323.6L1081.7 324.0 M1075.3 327.1L1081.7 324.0 M1075.3 327.1L1080.1 330.5 M1075.3 327.1L1070.3 334.4 M1080.1 330.5L1089.7 324.9 M1080.1 330.5L1078.8 336.0 M1080.1 330.5L1089.5 332.3 M1078.8 336.0L1089.5 332.3 M1078.8 336.0L1088.3 337.5 M1078.8 336.0L1081.5 341.1 M1088.3 337.5L1101.6 331.0 M1088.3 337.5L1088.7 345.1 M1088.3 337.5L1102.4 339.8 M1088.7 345.1L1102.4 339.8 M1088.7 345.1L1100.2 346.9 M1088.7 345.1L1093.0 350.8 M1100.2 346.9L1109.6 341.8 M1079.7 317.3L1090.9 311.7 M1079.7 317.3L1084.8 318.3 M1079.7 317.3L1074.3 323.6 M1079.7 317.3L1096.5 312.4 M1084.8 318.3L1096.5 312.4 M1084.8 318.3L1081.7 324.0 M1084.8 318.3L1096.5 316.6 M1081.7 324.0L1096.5 316.6 M1081.7 324.0L1089.7 324.9 M1081.7 324.0L1080.1 330.5 M1081.7 324.0L1104.1 318.6 M1089.7 324.9L1104.1 318.6 M1089.7 324.9L1089.5 332.3 M1089.7 324.9L1105.2 323.1 M1089.5 332.3L1105.2 323.1 M1089.5 332.3L1101.6 331.0 M1089.5 332.3L1088.3 337.5 M1089.5 332.3L1115.0 325.5 M1101.6 331.0L1115.0 325.5 M1101.6 331.0L1102.4 339.8 M1101.6 331.0L1112.8 332.7 M1102.4 339.8L1112.8 332.7 M1102.4 339.8L1109.6 341.8 M1102.4 339.8L1100.2 346.9 M1109.6 341.8L1121.6 335.4 M1090.9 311.7L1097.1 308.6 M1090.9 311.7L1096.5 312.4 M1090.9 311.7L1084.8 318.3 M1096.5 312.4L1105.0 307.5 M1096.5 312.4L1096.5 316.6 M1096.5 312.4L1106.5 311.2 M1096.5 316.6L1106.5 311.2 M1096.5 316.6L1104.1 318.6 M1096.5 316.6L1089.7 324.9 M1096.5 316.6L1111.8 313.2 M1104.1 318.6L1111.8 313.2 M1104.1 318.6L1105.2 323.1 M1104.1 318.6L1116.1 318.9 M1104.1 318.6L1116.1 318.9 M1105.2 323.1L1116.1 318.9 M1105.2 323.1L1115.0 325.5 M1105.2 323.1L1101.6 331.0 M1105.2 323.1L1123.9 319.6 M1115.0 325.5L1123.9 319.6 M1115.0 325.5L1112.8 332.7 M1115.0 325.5L1120.8 328.1 M1115.0 325.5L1120.8 328.1 M1112.8 332.7L1120.8 328.1 M1112.8 332.7L1121.6 335.4 M1112.8 332.7L1109.6 341.8 M1121.6 335.4L1132.9 329.4 M1097.1 308.6L1108.6 302.9 M1097.1 308.6L1105.0 307.5 M1097.1 308.6L1096.5 312.4 M1105.0 307.5L1117.9 301.3 M1105.0 307.5L1106.5 311.2 M1105.0 307.5L1119.8 306.1 M1106.5 311.2L1119.8 306.1 M1106.5 311.2L1111.8 313.2 M1106.5 311.2L1104.1 318.6 M1111.8 313.2L1125.1 306.8 M1111.8 313.2L1116.1 318.9 M1111.8 313.2L1126.5 312.0 M1111.8 313.2L1126.5 312.0 M1116.1 318.9L1126.5 312.0 M1116.1 318.9L1123.9 319.6 M1116.1 318.9L1115.0 325.5 M1116.1 318.9L1132.1 314.5 M1123.9 319.6L1132.1 314.5 M1123.9 319.6L1120.8 328.1 M1123.9 319.6L1132.7 322.4 M1120.8 328.1L1132.7 322.4 M1120.8 328.1L1132.9 329.4 M1120.8 328.1L1121.6 335.4 M1120.8 328.1L1143.7 323.6 M1132.9 329.4L1143.7 323.6 M1108.6 302.9L1119.7 297.4 M1108.6 302.9L1117.9 301.3 M1108.6 302.9L1105.0 307.5 M1108.6 302.9L1128.8 295.4 M1117.9 301.3L1128.8 295.4 M1117.9 301.3L1119.8 306.1 M1117.9 301.3L1125.0 301.6 M1119.8 306.1L1125.0 301.6 M1119.8 306.1L1125.1 306.8 M1119.8 306.1L1111.8 313.2 M1119.8 306.1L1134.7 301.5 M1125.1 306.8L1134.7 301.5 M1125.1 306.8L1126.5 312.0 M1125.1 306.8L1131.6 309.4 M1126.5 312.0L1131.6 309.4 M1126.5 312.0L1132.1 314.5 M1126.5 312.0L1123.9 319.6 M1126.5 312.0L1143.2 310.4 M1132.1 314.5L1143.2 310.4 M1132.1 314.5L1132.7 322.4 M1132.1 314.5L1144.8 316.8 M1132.7 322.4L1144.8 316.8 M1132.7 322.4L1143.7 323.6 M1132.7 322.4L1132.9 329.4 M1143.7 323.6L1155.2 317.4 M1119.7 297.4L1133.7 290.4 M1119.7 297.4L1128.8 295.4 M1119.7 297.4L1117.9 301.3 M1119.7 297.4L1142.4 289.3 M1128.8 295.4L1142.4 289.3 M1128.8 295.4L1125.0 301.6 M1128.8 295.4L1137.5 297.1 M1125.0 301.6L1137.5 297.1 M1125.0 301.6L1134.7 301.5 M1125.0 301.6L1125.1 306.8 M1134.7 301.5L1145.1 297.8 M1134.7 301.5L1131.6 309.4 M1134.7 301.5L1145.5 301.5 M1134.7 301.5L1145.5 301.5 M1131.6 309.4L1145.5 301.5 M1131.6 309.4L1143.2 310.4 M1131.6 309.4L1132.1 314.5 M1143.2 310.4L1158.1 303.6 M1143.2 310.4L1144.8 316.8 M1143.2 310.4L1156.0 310.9 M1143.2 310.4L1156.0 310.9 M1144.8 316.8L1156.0 310.9 M1144.8 316.8L1155.2 317.4 M1144.8 316.8L1143.7 323.6 M1144.8 316.8L1166.7 311.4 M1155.2 317.4L1166.7 311.4 M1133.7 290.4L1141.0 286.8 M1133.7 290.4L1142.4 289.3 M1133.7 290.4L1128.8 295.4 M1133.7 290.4L1151.2 285.0 M1142.4 289.3L1151.2 285.0 M1142.4 289.3L1137.5 297.1 M1142.4 289.3L1151.1 289.9 M1137.5 297.1L1151.1 289.9 M1137.5 297.1L1145.1 297.8 M1137.5 297.1L1134.7 301.5 M1145.1 297.8L1159.7 290.1 M1145.1 297.8L1145.5 301.5 M1145.1 297.8L1158.9 296.4 M1145.5 301.5L1158.9 296.4 M1145.5 301.5L1158.1 303.6 M1145.5 301.5L1143.2 310.4 M1158.1 303.6L1166.6 297.4 M1158.1 303.6L1156.0 310.9 M1158.1 303.6L1161.8 306.1 M1158.1 303.6L1161.8 306.1 M1156.0 310.9L1161.8 306.1 M1156.0 310.9L1166.7 311.4 M1156.0 310.9L1155.2 317.4 M1156.0 310.9L1174.6 307.3 M1166.7 311.4L1174.6 307.3 M1141.0 286.8L1151.7 281.5 M1141.0 286.8L1151.2 285.0 M1141.0 286.8L1142.4 289.3 M1151.2 285.0L1164.0 278.8 M1151.2 285.0L1151.1 289.9 M1151.2 285.0L1160.4 284.8 M1151.1 289.9L1160.4 284.8 M1151.1 289.9L1159.7 290.1 M1151.1 289.9L1145.1 297.8 M1159.7 290.1L1169.4 285.0 M1159.7 290.1L1158.9 296.4 M1159.7 290.1L1164.5 293.8 M1158.9 296.4L1164.5 293.8 M1158.9 296.4L1166.6 297.4 M1158.9 296.4L1158.1 303.6 M1166.6 297.4L1178.2 292.2 M1166.6 297.4L1161.8 306.1 M1166.6 297.4L1176.5 300.0 M1161.8 306.1L1176.5 300.0 M1161.8 306.1L1174.6 307.3 M1161.8 306.1L1166.7 311.4 M1174.6 307.3L1183.5 302.7 M1151.7 281.5L1166.4 274.2 M1151.7 281.5L1164.0 278.8 M1151.7 281.5L1151.2 285.0 M1151.7 281.5L1170.7 274.7 M1164.0 278.8L1170.7 274.7 M1164.0 278.8L1160.4 284.8 M1164.0 278.8L1169.2 280.7 M1160.4 284.8L1169.2 280.7 M1160.4 284.8L1169.4 285.0 M1160.4 284.8L1159.7 290.1 M1160.4 284.8L1177.7 281.4 M1169.4 285.0L1177.7 281.4 M1169.4 285.0L1164.5 293.8 M1169.4 285.0L1180.5 284.9 M1164.5 293.8L1180.5 284.9 M1164.5 293.8L1178.2 292.2 M1164.5 293.8L1166.6 297.4 M1178.2 292.2L1186.6 287.8 M1178.2 292.2L1176.5 300.0 M1178.2 292.2L1188.2 294.3 M1178.2 292.2L1188.2 294.3 M1176.5 300.0L1188.2 294.3 M1176.5 300.0L1183.5 302.7 M1176.5 300.0L1174.6 307.3 M1176.5 300.0L1197.3 295.4 M1183.5 302.7L1197.3 295.4 M1166.4 274.2L1176.6 269.2 M1166.4 274.2L1170.7 274.7 M1166.4 274.2L1164.0 278.8 M1170.7 274.7L1180.6 270.0 M1170.7 274.7L1169.2 280.7 M1170.7 274.7L1179.9 275.4 M1170.7 274.7L1179.9 275.4 M1169.2 280.7L1179.9 275.4 M1169.2 280.7L1177.7 281.4 M1169.2 280.7L1169.4 285.0 M1177.7 281.4L1188.8 275.4 M1177.7 281.4L1180.5 284.9 M1177.7 281.4L1184.7 281.7 M1180.5 284.9L1184.7 281.7 M1180.5 284.9L1186.6 287.8 M1180.5 284.9L1178.2 292.2 M1180.5 284.9L1197.0 283.1 M1186.6 287.8L1197.0 283.1 M1186.6 287.8L1188.2 294.3 M1186.6 287.8L1198.7 288.6 M1186.6 287.8L1198.7 288.6 M1188.2 294.3L1198.7 288.6 M1188.2 294.3L1197.3 295.4 M1188.2 294.3L1183.5 302.7 M1197.3 295.4L1206.0 290.9 M1176.6 269.2L1186.7 264.3 M1176.6 269.2L1180.6 270.0 M1176.6 269.2L1170.7 274.7 M1180.6 270.0L1194.1 263.8 M1180.6 270.0L1179.9 275.4 M1180.6 270.0L1190.1 270.6 M1179.9 275.4L1190.1 270.6 M1179.9 275.4L1188.8 275.4 M1179.9 275.4L1177.7 281.4 M1188.8 275.4L1199.6 271.0 M1188.8 275.4L1184.7 281.7 M1188.8 275.4L1200.9 273.5 M1188.8 275.4L1200.9 273.5 M1184.7 281.7L1200.9 273.5 M1184.7 281.7L1197.0 283.1 M1184.7 281.7L1186.6 287.8 M1184.7 281.7L1209.1 277.3 M1197.0 283.1L1209.1 277.3 M1197.0 283.1L1198.7 288.6 M1197.0 283.1L1210.5 281.9 M1197.0 283.1L1210.5 281.9 M1198.7 288.6L1210.5 281.9 M1198.7 288.6L1206.0 290.9 M1198.7 288.6L1197.3 295.4 M1198.7 288.6L1216.4 285.5 M1206.0 290.9L1216.4 285.5 M1186.7 264.3L1195.7 259.9 M1186.7 264.3L1194.1 263.8 M1186.7 264.3L1180.6 270.0 M1194.1 263.8L1207.6 256.8 M1194.1 263.8L1190.1 270.6 M1194.1 263.8L1202.6 263.0 M1190.1 270.6L1202.6 263.0 M1190.1 270.6L1199.6 271.0 M1190.1 270.6L1188.8 275.4 M1199.6 271.0L1212.3 264.6 M1199.6 271.0L1200.9 273.5 M1199.6 271.0L1208.2 271.8 M1199.6 271.0L1208.2 271.8 M1200.9 273.5L1208.2 271.8 M1200.9 273.5L1209.1 277.3 M1200.9 273.5L1197.0 283.1 M1209.1 277.3L1220.2 271.8 M1209.1 277.3L1210.5 281.9 M1209.1 277.3L1219.2 276.8 M1210.5 281.9L1219.2 276.8 M1210.5 281.9L1216.4 285.5 M1210.5 281.9L1206.0 290.9 M1216.4 285.5L1230.7 278.0 M1195.7 259.9L1208.3 253.7 M1195.7 259.9L1207.6 256.8 M1195.7 259.9L1194.1 263.8 M1207.6 256.8L1212.6 254.0 M1207.6 256.8L1202.6 263.0 M1207.6 256.8L1213.3 258.3 M1202.6 263.0L1213.3 258.3 M1202.6 263.0L1212.3 264.6 M1202.6 263.0L1199.6 271.0 M1202.6 263.0L1220.4 258.7 M1212.3 264.6L1220.4 258.7 M1212.3 264.6L1208.2 271.8 M1212.3 264.6L1219.3 264.9 M1212.3 264.6L1219.3 264.9 M1208.2 271.8L1219.3 264.9 M1208.2 271.8L1220.2 271.8 M1208.2 271.8L1209.1 277.3 M1208.2 271.8L1231.2 263.9 M1220.2 271.8L1231.2 263.9 M1220.2 271.8L1219.2 276.8 M1220.2 271.8L1231.3 272.2 M1220.2 271.8L1231.3 272.2 M1219.2 276.8L1231.3 272.2 M1219.2 276.8L1230.7 278.0 M1219.2 276.8L1216.4 285.5 M1219.2 276.8L1236.7 274.9 M1230.7 278.0L1236.7 274.9 M1208.3 253.7L1221.8 247.1 M1208.3 253.7L1212.6 254.0 M1208.3 253.7L1207.6 256.8 M1212.6 254.0L1228.6 247.5 M1212.6 254.0L1213.3 258.3 M1212.6 254.0L1222.8 253.4 M1213.3 258.3L1222.8 253.4 M1213.3 258.3L1220.4 258.7 M1213.3 258.3L1212.3 264.6 M1220.4 258.7L1233.1 254.3 M1220.4 258.7L1219.3 264.9 M1220.4 258.7L1231.6 258.8 M1219.3 264.9L1231.6 258.8 M1219.3 264.9L1231.2 263.9 M1219.3 264.9L1220.2 271.8 M1219.3 264.9L1239.9 260.1 M1231.2 263.9L1239.9 260.1 M1231.2 263.9L1231.3 272.2 M1231.2 263.9L1236.3 267.6 M1231.3 272.2L1236.3 267.6 M1231.3 272.2L1236.7 274.9 M1231.3 272.2L1230.7 278.0 M1236.7 274.9L1251.5 267.2 M1221.8 247.1L1228.7 243.7 M1221.8 247.1L1228.6 247.5 M1221.8 247.1L1212.6 254.0 M1228.6 247.5L1240.1 240.9 M1228.6 247.5L1222.8 253.4 M1228.6 247.5L1233.6 248.3 M1222.8 253.4L1233.6 248.3 M1222.8 253.4L1233.1 254.3 M1222.8 253.4L1220.4 258.7 M1222.8 253.4L1241.6 248.6 M1233.1 254.3L1241.6 248.6 M1233.1 254.3L1231.6 258.8 M1233.1 254.3L1245.4 253.1 M1231.6 258.8L1245.4 253.1 M1231.6 258.8L1239.9 260.1 M1231.6 258.8L1231.2 263.9 M1239.9 260.1L1253.5 254.1 M1239.9 260.1L1236.3 267.6 M1239.9 260.1L1253.7 260.9 M1239.9 260.1L1253.7 260.9 M1236.3 267.6L1253.7 260.9 M1236.3 267.6L1251.5 267.2 M1236.3 267.6L1236.7 274.9 M1251.5 267.2L1260.4 262.5 M1228.7 243.7L1242.2 237.1 M1228.7 243.7L1240.1 240.9 M1228.7 243.7L1228.6 247.5 M1228.7 243.7L1246.0 238.7 M1240.1 240.9L1246.0 238.7 M1240.1 240.9L1233.6 248.3 M1240.1 240.9L1245.9 242.7 M1240.1 240.9L1245.9 242.7 M1233.6 248.3L1245.9 242.7 M1233.6 248.3L1241.6 248.6 M1233.6 248.3L1233.1 254.3 M1233.6 248.3L1255.0 241.7 M1241.6 248.6L1255.0 241.7 M1241.6 248.6L1245.4 253.1 M1241.6 248.6L1250.8 250.5 M1245.4 253.1L1250.8 250.5 M1245.4 253.1L1253.5 254.1 M1245.4 253.1L1239.9 260.1 M1253.5 254.1L1259.8 250.5 M1253.5 254.1L1253.7 260.9 M1253.5 254.1L1259.7 256.1 M1253.7 260.9L1259.7 256.1 M1253.7 260.9L1260.4 262.5 M1253.7 260.9L1251.5 267.2 M1253.7 260.9L1272.1 256.4 M1260.4 262.5L1272.1 256.4 M1242.2 237.1L1254.7 231.0 M1242.2 237.1L1246.0 238.7 M1242.2 237.1L1240.1 240.9 M1246.0 238.7L1258.1 232.6 M1246.0 238.7L1245.9 242.7 M1246.0 238.7L1255.5 237.5 M1246.0 238.7L1255.5 237.5 M1245.9 242.7L1255.5 237.5 M1245.9 242.7L1255.0 241.7 M1245.9 242.7L1241.6 248.6 M1245.9 242.7L1264.1 237.0 M1255.0 241.7L1264.1 237.0 M1255.0 241.7L1250.8 250.5 M1255.0 241.7L1260.9 243.7 M1250.8 250.5L1260.9 243.7 M1250.8 250.5L1259.8 250.5 M1250.8 250.5L1253.5 254.1 M1259.8 250.5L1275.2 242.7 M1259.8 250.5L1259.7 256.1 M1259.8 250.5L1270.7 252.0 M1259.7 256.1L1270.7 252.0 M1259.7 256.1L1272.1 256.4 M1259.7 256.1L1260.4 262.5 M1272.1 256.4L1284.2 250.1 M1254.7 231.0L1262.3 227.3 M1254.7 231.0L1258.1 232.6 M1254.7 231.0L1246.0 238.7 M1258.1 232.6L1267.7 227.2 M1258.1 232.6L1255.5 237.5 M1258.1 232.6L1264.8 232.6 M1255.5 237.5L1264.8 232.6 M1255.5 237.5L1264.1 237.0 M1255.5 237.5L1255.0 241.7 M1264.1 237.0L1273.1 232.6 M1264.1 237.0L1260.9 243.7 M1264.1 237.0L1272.9 238.5 M1260.9 243.7L1272.9 238.5 M1260.9 243.7L1275.2 242.7 M1260.9 243.7L1259.8 250.5 M1275.2 242.7L1286.2 237.7 M1275.2 242.7L1270.7 252.0 M1275.2 242.7L1281.6 245.1 M1270.7 252.0L1281.6 245.1 M1270.7 252.0L1284.2 250.1 M1270.7 252.0L1272.1 256.4 M1284.2 250.1L1292.0 246.1 M1262.3 227.3L1272.7 222.1 M1262.3 227.3L1267.7 227.2 M1262.3 227.3L1258.1 232.6 M1267.7 227.2L1279.6 221.0 M1267.7 227.2L1264.8 232.6 M1267.7 227.2L1277.5 227.3 M1267.7 227.2L1277.5 227.3 M1264.8 232.6L1277.5 227.3 M1264.8 232.6L1273.1 232.6 M1264.8 232.6L1264.1 237.0 M1264.8 232.6L1284.5 227.3 M1273.1 232.6L1284.5 227.3 M1273.1 232.6L1272.9 238.5 M1273.1 232.6L1286.3 232.3 M1272.9 238.5L1286.3 232.3 M1272.9 238.5L1286.2 237.7 M1272.9 238.5L1275.2 242.7 M1272.9 238.5L1292.0 233.4 M1286.2 237.7L1292.0 233.4 M1286.2 237.7L1281.6 245.1 M1286.2 237.7L1291.2 240.1 M1281.6 245.1L1291.2 240.1 M1281.6 245.1L1292.0 246.1 M1281.6 245.1L1284.2 250.1 M1281.6 245.1L1302.1 240.7 M1292.0 246.1L1302.1 240.7 M1272.7 222.1L1287.1 214.7 M1272.7 222.1L1279.6 221.0 M1272.7 222.1L1267.7 227.2 M1272.7 222.1L1294.3 214.6 M1279.6 221.0L1294.3 214.6 M1279.6 221.0L1277.5 227.3 M1279.6 221.0L1285.6 221.5 M1279.6 221.0L1285.6 221.5 M1277.5 227.3L1285.6 221.5 M1277.5 227.3L1284.5 227.3 M1277.5 227.3L1273.1 232.6 M1284.5 227.3L1299.4 220.5 M1284.5 227.3L1286.3 232.3 M1284.5 227.3L1295.6 226.8 M1284.5 227.3L1295.6 226.8 M1286.3 232.3L1295.6 226.8 M1286.3 232.3L1292.0 233.4 M1286.3 232.3L1286.2 237.7 M1286.3 232.3L1301.6 228.7 M1292.0 233.4L1301.6 228.7 M1292.0 233.4L1291.2 240.1 M1292.0 233.4L1306.7 233.1 M1292.0 233.4L1306.7 233.1 M1291.2 240.1L1306.7 233.1 M1291.2 240.1L1302.1 240.7 M1291.2 240.1L1292.0 246.1 M1291.2 240.1L1315.1 233.8 M1302.1 240.7L1315.1 233.8 M1287.1 214.7L1298.0 209.1 M1287.1 214.7L1294.3 214.6 M1287.1 214.7L1279.6 221.0 M1294.3 214.6L1300.8 210.2 M1294.3 214.6L1285.6 221.5 M1294.3 214.6L1297.8 216.1 M1285.6 221.5L1297.8 216.1 M1285.6 221.5L1299.4 220.5 M1285.6 221.5L1284.5 227.3 M1299.4 220.5L1310.0 215.1 M1299.4 220.5L1295.6 226.8 M1299.4 220.5L1307.9 220.6 M1295.6 226.8L1307.9 220.6 M1295.6 226.8L1301.6 228.7 M1295.6 226.8L1292.0 233.4 M1295.6 226.8L1317.0 220.9 M1301.6 228.7L1317.0 220.9 M1301.6 228.7L1306.7 233.1 M1301.6 228.7L1313.6 227.4 M1306.7 233.1L1313.6 227.4 M1306.7 233.1L1315.1 233.8 M1306.7 233.1L1302.1 240.7 M1315.1 233.8L1325.3 228.5 M1298.0 209.1L1304.4 205.9 M1298.0 209.1L1300.8 210.2 M1298.0 209.1L1294.3 214.6 M1300.8 210.2L1316.2 203.1 M1300.8 210.2L1297.8 216.1 M1300.8 210.2L1309.0 209.6 M1297.8 216.1L1309.0 209.6 M1297.8 216.1L1310.0 215.1 M1297.8 216.1L1299.4 220.5 M1310.0 215.1L1317.7 210.4 M1310.0 215.1L1307.9 220.6 M1310.0 215.1L1317.7 214.3 M1310.0 215.1L1317.7 214.3 M1307.9 220.6L1317.7 214.3 M1307.9 220.6L1317.0 220.9 M1307.9 220.6L1301.6 228.7 M1317.0 220.9L1323.6 217.6 M1317.0 220.9L1313.6 227.4 M1317.0 220.9L1325.1 222.3 M1313.6 227.4L1325.1 222.3 M1313.6 227.4L1325.3 228.5 M1313.6 227.4L1315.1 233.8 M1325.3 228.5L1332.5 224.6 M1304.4 205.9L1317.5 199.2 M1304.4 205.9L1316.2 203.1 M1304.4 205.9L1300.8 210.2 M1304.4 205.9L1321.2 200.0 M1316.2 203.1L1321.2 200.0 M1316.2 203.1L1309.0 209.6 M1316.2 203.1L1321.8 204.5 M1316.2 203.1L1321.8 204.5 M1309.0 209.6L1321.8 204.5 M1309.0 209.6L1317.7 210.4 M1309.0 209.6L1310.0 215.1 M1309.0 209.6L1331.2 204.0 M1317.7 210.4L1331.2 204.0 M1317.7 210.4L1317.7 214.3 M1317.7 210.4L1327.2 209.6 M1317.7 210.4L1327.2 209.6 M1317.7 214.3L1327.2 209.6 M1317.7 214.3L1323.6 217.6 M1317.7 214.3L1317.0 220.9 M1323.6 217.6L1336.1 212.2 M1323.6 217.6L1325.1 222.3 M1323.6 217.6L1336.3 216.2 M1325.1 222.3L1336.3 216.2 M1325.1 222.3L1332.5 224.6 M1325.1 222.3L1325.3 228.5 M1332.5 224.6L1341.9 219.7 M1317.5 199.2L1327.7 194.0 M1317.5 199.2L1321.2 200.0 M1317.5 199.2L1316.2 203.1 M1321.2 200.0L1336.1 192.5 M1321.2 200.0L1321.8 204.5 M1321.2 200.0L1331.0 199.2 M1321.8 204.5L1331.0 199.2 M1321.8 204.5L1331.2 204.0 M1321.8 204.5L1317.7 210.4 M1321.8 204.5L1342.8 196.7 M1331.2 204.0L1342.8 196.7 M1331.2 204.0L1327.2 209.6 M1331.2 204.0L1335.5 205.5 M1331.2 204.0L1335.5 205.5 M1327.2 209.6L1335.5 205.5 M1327.2 209.6L1336.1 212.2 M1327.2 209.6L1323.6 217.6 M1327.2 209.6L1347.3 205.6 M1336.1 212.2L1347.3 205.6 M1336.1 212.2L1336.3 216.2 M1336.1 212.2L1344.8 213.0 M1336.3 216.2L1344.8 213.0 M1336.3 216.2L1341.9 219.7 M1336.3 216.2L1332.5 224.6 M1336.3 216.2L1356.7 211.8 M1341.9 219.7L1356.7 211.8 M1327.7 194.0L1338.6 188.4 M1327.7 194.0L1336.1 192.5 M1327.7 194.0L1321.2 200.0 M1327.7 194.0L1344.7 189.0 M1336.1 192.5L1344.7 189.0 M1336.1 192.5L1331.0 199.2 M1336.1 192.5L1342.3 193.7 M1331.0 199.2L1342.3 193.7 M1331.0 199.2L1342.8 196.7 M1331.0 199.2L1331.2 204.0 M1331.0 199.2L1349.3 193.3 M1342.8 196.7L1349.3 193.3 M1342.8 196.7L1335.5 205.5 M1342.8 196.7L1350.5 197.7 M1342.8 196.7L1350.5 197.7 M1335.5 205.5L1350.5 197.7 M1335.5 205.5L1347.3 205.6 M1335.5 205.5L1336.1 212.2 M1335.5 205.5L1360.9 198.1 M1347.3 205.6L1360.9 198.1 M1347.3 205.6L1344.8 213.0 M1347.3 205.6L1354.3 206.5 M1344.8 213.0L1354.3 206.5 M1344.8 213.0L1356.7 211.8 M1344.8 213.0L1341.9 219.7 M1356.7 211.8L1365.4 207.3 M1338.6 188.4L1350.5 182.4 M1338.6 188.4L1344.7 189.0 M1338.6 188.4L1336.1 192.5 M1338.6 188.4L1359.2 180.3 M1344.7 189.0L1359.2 180.3 M1344.7 189.0L1342.3 193.7 M1344.7 189.0L1352.9 187.2 M1342.3 193.7L1352.9 187.2 M1342.3 193.7L1349.3 193.3 M1342.3 193.7L1342.8 196.7 M1349.3 193.3L1364.5 185.3 M1349.3 193.3L1350.5 197.7 M1349.3 193.3L1356.6 194.0 M1350.5 197.7L1356.6 194.0 M1350.5 197.7L1360.9 198.1 M1350.5 197.7L1347.3 205.6 M1360.9 198.1L1368.9 194.9 M1360.9 198.1L1354.3 206.5 M1360.9 198.1L1370.0 199.6 M1360.9 198.1L1370.0 199.6 M1354.3 206.5L1370.0 199.6 M1354.3 206.5L1365.4 207.3 M1354.3 206.5L1356.7 211.8 M1365.4 207.3L1379.4 199.8 M1350.5 182.4L1362.9 176.1 M1350.5 182.4L1359.2 180.3 M1350.5 182.4L1344.7 189.0 M1359.2 180.3L1366.3 176.9 M1359.2 180.3L1352.9 187.2 M1359.2 180.3L1367.6 180.6 M1352.9 187.2L1367.6 180.6 M1352.9 187.2L1364.5 185.3 M1352.9 187.2L1349.3 193.3 M1352.9 187.2L1370.3 183.4 M1364.5 185.3L1370.3 183.4 M1364.5 185.3L1356.6 194.0 M1364.5 185.3L1369.8 187.8 M1356.6 194.0L1369.8 187.8 M1356.6 194.0L1368.9 194.9 M1356.6 194.0L1360.9 198.1 M1368.9 194.9L1378.0 188.4 M1368.9 194.9L1370.0 199.6 M1368.9 194.9L1374.6 196.0 M1368.9 194.9L1374.6 196.0 M1370.0 199.6L1374.6 196.0 M1370.0 199.6L1379.4 199.8 M1370.0 199.6L1365.4 207.3 M1379.4 199.8L1386.2 196.3 M1362.9 176.1L1373.9 170.9 M1362.9 176.1L1366.3 176.9 M1362.9 176.1L1359.2 180.3 M1362.9 176.1L1376.6 173.1 M1366.3 176.9L1376.6 173.1 M1366.3 176.9L1367.6 180.6 M1366.3 176.9L1373.5 177.1 M1367.6 180.6L1373.5 177.1 M1367.6 180.6L1370.3 183.4 M1367.6 180.6L1364.5 185.3 M1367.6 180.6L1386.0 176.0 M1370.3 183.4L1386.0 176.0 M1370.3 183.4L1369.8 187.8 M1370.3 183.4L1380.4 181.8 M1370.3 183.4L1380.4 181.8 M1369.8 187.8L1380.4 181.8 M1369.8 187.8L1378.0 188.4 M1369.8 187.8L1368.9 194.9 M1369.8 187.8L1389.9 182.9 M1378.0 188.4L1389.9 182.9 M1378.0 188.4L1374.6 196.0 M1378.0 188.4L1390.6 187.5 M1374.6 196.0L1390.6 187.5 M1374.6 196.0L1386.2 196.3 M1374.6 196.0L1379.4 199.8 M1386.2 196.3L1396.8 190.6 M1373.9 170.9L1384.4 166.0 M1373.9 170.9L1376.6 173.1 M1373.9 170.9L1366.3 176.9 M1373.9 170.9L1386.4 167.7 M1376.6 173.1L1386.4 167.7 M1376.6 173.1L1373.5 177.1 M1376.6 173.1L1388.4 170.6 M1373.5 177.1L1388.4 170.6 M1373.5 177.1L1386.0 176.0 M1373.5 177.1L1370.3 183.4 M1386.0 176.0L1391.0 172.1 M1386.0 176.0L1380.4 181.8 M1386.0 176.0L1390.1 178.9 M1380.4 181.8L1390.1 178.9 M1380.4 181.8L1389.9 182.9 M1380.4 181.8L1378.0 188.4 M1380.4 181.8L1399.8 178.7 M1389.9 182.9L1399.8 178.7 M1389.9 182.9L1390.6 187.5 M1389.9 182.9L1401.3 182.3 M1390.6 187.5L1401.3 182.3 M1390.6 187.5L1396.8 190.6 M1390.6 187.5L1386.2 196.3 M1390.6 187.5L1406.9 185.3 M1396.8 190.6L1406.9 185.3 M1384.4 166.0L1395.7 160.8 M1384.4 166.0L1386.4 167.7 M1384.4 166.0L1376.6 173.1 M1386.4 167.7L1400.6 160.8 M1386.4 167.7L1388.4 170.6 M1386.4 167.7L1398.1 165.2 M1386.4 167.7L1398.1 165.2 M1388.4 170.6L1398.1 165.2 M1388.4 170.6L1391.0 172.1 M1388.4 170.6L1386.0 176.0 M1391.0 172.1L1403.2 166.1 M1391.0 172.1L1390.1 178.9 M1391.0 172.1L1405.0 171.4 M1391.0 172.1L1405.0 171.4 M1390.1 178.9L1405.0 171.4 M1390.1 178.9L1399.8 178.7 M1390.1 178.9L1389.9 182.9 M1390.1 178.9L1413.1 172.4 M1399.8 178.7L1413.1 172.4 M1399.8 178.7L1401.3 182.3 M1399.8 178.7L1406.6 179.4 M1401.3 182.3L1406.6 179.4 M1401.3 182.3L1406.9 185.3 M1401.3 182.3L1396.8 190.6 M1406.9 185.3L1418.7 179.1 M1395.7 160.8L1406.5 155.7 M1395.7 160.8L1400.6 160.8 M1395.7 160.8L1386.4 167.7 M1395.7 160.8L1413.6 154.8 M1400.6 160.8L1413.6 154.8 M1400.6 160.8L1398.1 165.2 M1400.6 160.8L1406.3 161.5 M1398.1 165.2L1406.3 161.5 M1398.1 165.2L1403.2 166.1 M1398.1 165.2L1391.0 172.1 M1398.1 165.2L1416.4 161.3 M1403.2 166.1L1416.4 161.3 M1403.2 166.1L1405.0 171.4 M1403.2 166.1L1412.1 167.7 M1405.0 171.4L1412.1 167.7 M1405.0 171.4L1413.1 172.4 M1405.0 171.4L1399.8 178.7 M1413.1 172.4L1424.2 166.5 M1413.1 172.4L1406.6 179.4 M1413.1 172.4L1422.3 172.1 M1406.6 179.4L1422.3 172.1 M1406.6 179.4L1418.7 179.1 M1406.6 179.4L1406.9 185.3 M1418.7 179.1L1428.4 174.0 M1406.5 155.7L1413.5 152.4 M1406.5 155.7L1413.6 154.8 M1406.5 155.7L1400.6 160.8 M1413.6 154.8L1421.2 151.7 M1413.6 154.8L1406.3 161.5 M1413.6 154.8L1415.8 156.6 M1406.3 161.5L1415.8 156.6 M1406.3 161.5L1416.4 161.3 M1406.3 161.5L1403.2 166.1 M1416.4 161.3L1427.9 154.4 M1416.4 161.3L1412.1 167.7 M1416.4 161.3L1421.0 161.7 M1412.1 167.7L1421.0 161.7 M1412.1 167.7L1424.2 166.5 M1412.1 167.7L1413.1 172.4 M1412.1 167.7L1433.0 160.8 M1424.2 166.5L1433.0 160.8 M1424.2 166.5L1422.3 172.1 M1424.2 166.5L1434.5 166.3 M1422.3 172.1L1434.5 166.3 M1422.3 172.1L1428.4 174.0 M1422.3 172.1L1418.7 179.1 M1422.3 172.1L1442.9 166.1 M1428.4 174.0L1442.9 166.1 M1413.5 152.4L1424.0 147.5 M1413.5 152.4L1421.2 151.7 M1413.5 152.4L1413.6 154.8 M1413.5 152.4L1429.8 146.8 M1421.2 151.7L1429.8 146.8 M1421.2 151.7L1415.8 156.6 M1421.2 151.7L1429.7 150.7 M1421.2 151.7L1429.7 150.7 M1415.8 156.6L1429.7 150.7 M1415.8 156.6L1427.9 154.4 M1415.8 156.6L1416.4 161.3 M1427.9 154.4L1436.8 150.0 M1427.9 154.4L1421.0 161.7 M1427.9 154.4L1434.7 155.9 M1421.0 161.7L1434.7 155.9 M1421.0 161.7L1433.0 160.8 M1421.0 161.7L1424.2 166.5 M1433.0 160.8L1445.0 155.4 M1433.0 160.8L1434.5 166.3 M1433.0 160.8L1444.0 160.6 M1434.5 166.3L1444.0 160.6 M1434.5 166.3L1442.9 166.1 M1434.5 166.3L1428.4 174.0 M1434.5 166.3L1448.3 163.0 M1442.9 166.1L1448.3 163.0 M1424.0 147.5L1438.4 140.8 M1424.0 147.5L1429.8 146.8 M1424.0 147.5L1421.2 151.7 M1429.8 146.8L1442.3 141.4 M1429.8 146.8L1429.7 150.7 M1429.8 146.8L1439.7 145.8 M1429.7 150.7L1439.7 145.8 M1429.7 150.7L1436.8 150.0 M1429.7 150.7L1427.9 154.4 M1436.8 150.0L1446.1 145.4 M1436.8 150.0L1434.7 155.9 M1436.8 150.0L1443.7 150.4 M1434.7 155.9L1443.7 150.4 M1434.7 155.9L1445.0 155.4 M1434.7 155.9L1433.0 160.8 M1445.0 155.4L1456.7 148.9 M1445.0 155.4L1444.0 160.6 M1445.0 155.4L1451.2 156.2 M1445.0 155.4L1451.2 156.2 M1444.0 160.6L1451.2 156.2 M1444.0 160.6L1448.3 163.0 M1444.0 160.6L1442.9 166.1 M1444.0 160.6L1464.0 154.2 M1448.3 163.0L1464.0 154.2 M1438.4 140.8L1447.2 136.7 M1438.4 140.8L1442.3 141.4 M1438.4 140.8L1429.8 146.8 M1438.4 140.8L1452.9 136.6 M1442.3 141.4L1452.9 136.6 M1442.3 141.4L1439.7 145.8 M1442.3 141.4L1452.5 139.9 M1439.7 145.8L1452.5 139.9 M1439.7 145.8L1446.1 145.4 M1439.7 145.8L1436.8 150.0 M1446.1 145.4L1456.5 140.6 M1446.1 145.4L1443.7 150.4 M1446.1 145.4L1458.8 143.9 M1443.7 150.4L1458.8 143.9 M1443.7 150.4L1456.7 148.9 M1443.7 150.4L1445.0 155.4 M1443.7 150.4L1466.8 142.5 M1456.7 148.9L1466.8 142.5 M1456.7 148.9L1451.2 156.2 M1456.7 148.9L1461.2 150.2 M1451.2 156.2L1461.2 150.2 M1451.2 156.2L1464.0 154.2 M1451.2 156.2L1448.3 163.0 M1464.0 154.2L1469.9 151.0 M1447.2 136.7L1458.0 131.6 M1447.2 136.7L1452.9 136.6 M1447.2 136.7L1442.3 141.4 M1452.9 136.6L1460.1 133.3 M1452.9 136.6L1452.5 139.9 M1452.9 136.6L1461.9 134.8 M1452.9 136.6L1461.9 134.8 M1452.5 139.9L1461.9 134.8 M1452.5 139.9L1456.5 140.6 M1452.5 139.9L1446.1 145.4 M1456.5 140.6L1464.9 137.2 M1456.5 140.6L1458.8 143.9 M1456.5 140.6L1467.0 138.9 M1458.8 143.9L1467.0 138.9 M1458.8 143.9L1466.8 142.5 M1458.8 143.9L1456.7 148.9 M1458.8 143.9L1470.8 142.0 M1466.8 142.5L1470.8 142.0 M1466.8 142.5L1461.2 150.2 M1466.8 142.5L1473.5 144.2 M1466.8 142.5L1473.5 144.2 M1461.2 150.2L1473.5 144.2 M1461.2 150.2L1469.9 151.0 M1461.2 150.2L1464.0 154.2 M1461.2 150.2L1477.0 147.0 M1469.9 151.0L1477.0 147.0 M1458.0 131.6L1460.1 133.3 M1458.0 131.6L1452.9 136.6 M1460.1 133.3L1461.9 134.8 M1461.9 134.8L1464.9 137.2 M1461.9 134.8L1456.5 140.6 M1464.9 137.2L1467.0 138.9 M1467.0 138.9L1470.8 142.0 M1467.0 138.9L1466.8 142.5 M1470.8 142.0L1473.5 144.2 M1473.5 144.2L1477.0 147.0 M1473.5 144.2L1469.9 151.0" stroke="#00ff00" stroke-width="1" fill="none" shape-rendering="crispEdges"/><path d="M795.7 463.9L809.9 461.9 M794.6 469.9L816.3 464.9 M814.6 490.0L835.5 486.9 M811.6 461.0L821.0 462.4 M808.2 469.2L834.6 462.2 M813.5 454.8L830.0 451.4 M824.1 454.5L833.3 455.8 M827.3 459.0L835.9 461.5 M835.6 469.5L850.1 469.6 M837.8 476.7L853.1 476.6 M833.1 449.8L842.3 451.0 M845.2 449.5L864.9 446.0 M855.2 451.0L871.2 450.0 M854.9 458.7L872.5 457.0 M867.7 459.6L878.0 462.1 M843.4 439.4L864.8 433.6 M856.1 443.8L872.6 442.1 M868.2 451.5L884.3 451.2 M855.1 433.5L871.6 430.1 M868.0 437.8L880.8 438.0 M867.5 444.7L891.7 439.8 M885.6 450.5L902.2 450.1 M883.0 430.3L898.5 429.2 M893.0 446.8L908.3 447.1 M879.4 426.2L902.6 420.5 M897.2 429.8L905.0 433.2 M896.8 437.2L914.7 436.0 M900.3 443.2L919.8 441.4 M901.6 427.6L925.3 423.1 M898.8 411.6L920.1 405.9 M921.3 425.1L940.5 423.2 M926.5 430.1L940.3 431.2 M918.5 406.7L936.4 403.6 M921.8 410.9L938.0 409.5 M935.8 425.5L958.1 422.4 M922.9 404.5L938.0 402.9 M931.0 406.3L943.3 406.8 M947.8 419.6L962.0 420.5 M931.4 395.3L945.2 393.3 M936.7 397.6L955.3 394.2 M949.4 403.8L967.1 402.2 M944.9 388.6L954.9 388.5 M955.4 394.2L966.0 395.4 M958.2 406.7L978.1 404.2 M973.0 407.0L982.8 409.8 M969.7 393.5L984.6 393.0 M969.1 376.4L981.5 375.0 M978.0 382.6L995.2 380.3 M977.4 389.5L1000.4 384.8 M980.0 395.5L996.1 394.7 M982.6 374.5L991.0 375.9 M990.2 382.9L1004.7 382.5 M992.2 389.0L1006.4 389.2 M997.9 393.8L1018.9 390.5 M993.3 374.7L1010.3 372.5 M1002.2 376.7L1021.5 373.8 M1005.6 382.0L1021.8 381.1 M1022.2 360.0L1031.7 361.4 M1022.4 354.3L1037.2 352.3 M1024.6 358.7L1044.2 355.0 M1030.8 361.9L1053.3 357.1 M1038.9 372.0L1063.9 366.4 M1033.5 348.7L1051.5 345.0 M1048.5 352.8L1057.3 355.0 M1052.2 357.7L1060.7 360.5 M1043.8 338.9L1054.4 338.1 M1050.8 339.9L1060.4 340.5 M1051.2 345.2L1062.8 345.4 M1053.1 350.4L1067.5 349.7 M1064.1 351.5L1070.0 355.6 M1060.7 340.3L1070.9 341.2 M1069.8 355.7L1091.3 351.7 M1062.3 329.6L1078.0 326.2 M1067.6 336.8L1089.7 331.5 M1082.3 349.1L1100.4 346.8 M1081.7 324.3L1096.7 321.9 M1092.1 336.8L1102.4 338.5 M1088.3 326.2L1111.4 320.3 M1110.1 334.4L1120.8 335.8 M1095.3 313.0L1108.7 310.7 M1103.4 324.5L1123.4 320.5 M1115.1 331.8L1128.5 331.8 M1107.7 306.8L1123.6 303.1 M1110.3 315.0L1134.1 308.6 M1125.3 319.5L1141.2 317.9 M1122.1 299.6L1129.4 300.2 M1120.1 304.9L1136.4 301.7 M1131.7 309.8L1144.6 309.4 M1137.7 313.0L1152.7 311.9 M1135.4 297.1L1151.2 294.2 M1154.1 311.2L1169.5 310.0 M1141.6 294.0L1158.8 290.3 M1164.6 305.7L1175.8 306.7 M1159.4 285.1L1168.9 285.2 M1166.2 304.9L1185.0 301.9 M1162.3 279.5L1179.0 275.3 M1160.9 284.4L1174.0 282.7 M1169.2 285.1L1178.0 286.2 M1172.5 295.1L1196.5 289.3 M1176.3 281.5L1193.0 278.7 M1185.7 272.0L1199.3 270.0 M1187.4 276.0L1204.9 272.6 M1188.8 280.8L1212.2 274.9 M1203.4 273.4L1214.1 273.9 M1208.5 265.5L1228.5 260.7 M1214.6 273.6L1233.1 270.4 M1215.6 253.3L1228.4 250.9 M1224.2 249.1L1243.5 243.4 M1240.4 254.7L1255.6 252.7 M1238.7 261.3L1257.1 258.0 M1248.6 262.4L1257.6 264.0 M1237.4 246.4L1251.3 244.1 M1246.0 246.7L1255.1 247.3 M1253.0 254.0L1264.9 253.9 M1251.9 260.7L1266.0 259.6 M1247.2 241.6L1269.3 235.0 M1260.5 244.6L1273.8 243.4 M1262.1 249.4L1281.9 245.2 M1267.8 252.5L1282.7 250.9 M1257.7 232.6L1275.6 227.4 M1265.4 237.0L1276.6 236.5 M1274.3 243.2L1287.1 242.5 M1277.9 247.3L1292.7 245.7 M1270.1 226.5L1280.0 225.1 M1274.1 232.6L1287.2 231.0 M1276.2 236.7L1290.4 234.9 M1276.8 223.0L1294.8 217.5 M1282.6 223.8L1300.3 219.1 M1288.9 225.0L1301.4 223.6 M1287.5 230.8L1305.9 226.8 M1291.0 234.6L1309.7 230.7 M1295.4 221.7L1309.8 219.3 M1307.8 225.8L1314.5 228.1 M1313.0 228.9L1326.5 227.8 M1309.8 209.8L1314.5 211.8 M1311.8 205.1L1328.6 200.2 M1322.3 207.8L1328.4 209.6 M1318.0 215.0L1335.0 211.6 M1322.3 199.7L1333.4 197.7 M1326.9 205.4L1342.5 202.3 M1338.9 209.6L1352.7 208.1 M1341.3 214.0L1353.9 213.3 M1335.1 193.2L1346.3 191.1 M1334.3 197.3L1355.8 190.5 M1337.3 200.0L1349.6 198.6 M1347.8 199.5L1356.5 200.4 M1353.0 207.9L1365.4 207.3 M1349.0 194.0L1366.3 189.9 M1360.2 204.1L1380.6 199.2 M1361.2 183.4L1375.8 180.4 M1377.9 194.8L1385.2 196.8 M1372.8 174.2L1377.2 175.6 M1371.4 178.4L1381.2 177.7 M1376.0 180.3L1388.0 179.0 M1388.9 178.6L1401.1 177.5 M1391.1 165.6L1400.2 164.5 M1390.4 169.2L1401.2 168.0 M1390.0 173.4L1407.7 169.2 M1402.4 176.8L1411.0 177.7 M1399.6 161.6L1415.5 157.2 M1401.3 164.0L1418.4 159.6 M1403.5 166.8L1421.1 162.6 M1416.5 174.9L1427.4 174.5 M1414.2 161.6L1434.3 155.8 M1420.4 162.9L1436.3 159.4 M1425.3 165.2L1431.1 167.3 M1422.2 171.9L1438.3 168.6 M1416.7 153.5L1438.1 146.2 M1424.8 152.7L1438.0 149.8 M1439.2 162.9L1446.3 164.1 M1432.2 149.1L1445.1 146.3 M1440.6 148.6L1454.9 145.3 M1445.1 159.7L1459.1 157.0 M1447.5 138.8L1461.8 134.7 M1450.7 140.1L1463.5 137.2 M1450.3 143.7L1464.9 140.2 M1452.3 146.6L1470.1 141.7 M1456.6 134.5L1467.1 132.1 M1459.5 139.2L1468.5 138.4 M1466.3 148.2L1478.5 146.2" stroke="#5fd35f" stroke-width="0.8" fill="none" opacity="0.6"/><polyline points="785.0,466.0 791.7,462.6 798.5,459.2 805.2,455.8 811.9,452.4 818.6,449.0 825.4,445.6 832.1,442.2 838.8,438.8 845.6,435.4 852.3,432.0 859.0,428.5 865.8,425.1 872.5,421.8 879.2,418.4 886.0,415.0 892.7,411.7 899.4,408.3 906.1,404.9 912.9,401.6 919.6,398.2 926.3,394.8 933.1,391.5 939.8,388.1 946.5,384.7 953.2,381.4 960.0,378.0 966.7,374.6 973.4,371.3 980.2,367.9 986.9,364.6 993.6,361.2 1000.4,357.8 1007.1,354.5 1013.8,351.1 1020.5,347.8 1027.3,344.4 1034.0,341.1 1040.7,337.7 1047.5,334.4 1054.2,331.0 1060.9,327.7 1067.7,324.3 1074.4,320.9 1081.1,317.6 1087.8,314.2 1094.6,310.9 1101.3,307.5 1108.0,304.2 1114.8,300.8 1121.5,297.5 1128.2,294.1 1135.0,290.8 1141.7,287.4 1148.4,284.1 1155.2,280.7 1161.9,277.4 1168.6,274.1 1175.3,270.8 1182.1,267.5 1188.8,264.3 1195.5,261.0 1202.3,257.7 1209.0,254.4 1215.7,251.1 1222.5,247.8 1229.2,244.5 1235.9,241.2 1242.6,237.9 1249.4,234.6 1256.1,231.3 1262.8,228.0 1269.6,224.7 1276.3,221.3 1283.0,217.8 1289.8,214.4 1296.5,210.9 1303.2,207.5 1309.9,204.1 1316.7,200.6 1323.4,197.2 1330.1,193.8 1336.9,190.3 1343.6,186.9 1350.3,183.5 1357.0,180.0 1363.8,176.7 1370.5,173.5 1377.2,170.4 1384.0,167.2 1390.7,164.1 1397.4,160.9 1404.2,157.8 1410.9,154.6 1417.6,151.5 1424.3,148.3 1431.1,145.2 1437.8,142.0 1444.5,138.9 1451.3,135.7 1458.0,132.6" stroke="#00ff00" stroke-width="2.4" fill="none"/><polygon points="776.0,518.0 772.0,508.0 770.0,498.0 769.5,488.0 770.5,479.0 774.0,472.0 779.0,468.0 786.0,466.5 795.0,467.0 803.0,471.0 810.0,477.0 815.0,484.0 819.0,491.0 821.0,497.0" fill="#a8a8ac" stroke="#000" stroke-width="1.1" stroke-linejoin="round"/><path d="M781.4 494.8L787.2 496.8 M781.4 494.8L779.3 487.8 M781.4 494.8L788.2 497.8 M788.2 497.8L787.2 496.8 M788.2 497.8L781.4 494.8 M788.2 497.8L784.3 506.2 M801.5 470.3L803.0 471.0 M801.5 470.3L802.2 474.7 M801.5 470.3L803.9 475.3 M782.5 479.0L776.1 478.1 M782.5 479.0L785.1 470.9 M782.5 479.0L783.8 470.2 M812.5 491.3L814.0 491.1 M812.5 491.3L812.2 496.3 M812.5 491.3L816.0 496.0 M802.2 474.7L803.9 475.3 M802.2 474.7L803.0 471.0 M802.2 474.7L801.5 470.3 M796.2 504.8L789.5 507.8 M796.2 504.8L788.2 497.8 M796.2 504.8L787.2 496.8 M808.4 497.1L812.2 496.3 M808.4 497.1L812.5 491.3 M808.4 497.1L816.0 496.0 M784.7 468.6L783.8 470.2 M784.7 468.6L785.1 470.9 M784.7 468.6L786.0 466.5 M814.0 491.1L812.5 491.3 M814.0 491.1L819.0 491.0 M814.0 491.1L816.0 496.0 M789.5 507.8L784.3 506.2 M789.5 507.8L796.2 504.8 M789.5 507.8L788.2 497.8 M776.1 478.1L770.5 479.0 M776.1 478.1L774.0 472.0 M776.1 478.1L782.5 479.0 M801.6 482.4L806.4 483.9 M801.6 482.4L806.1 477.8 M801.6 482.4L803.9 475.3 M795.4 486.7L801.6 482.4 M795.4 486.7L806.4 483.9 M795.4 486.7L790.3 474.7 M787.2 496.8L788.2 497.8 M787.2 496.8L781.4 494.8 M787.2 496.8L784.3 506.2 M803.9 475.3L802.2 474.7 M803.9 475.3L806.1 477.8 M803.9 475.3L803.0 471.0 M816.0 496.0L812.2 496.3 M816.0 496.0L821.0 497.0 M816.0 496.0L814.0 491.1 M806.1 477.8L803.9 475.3 M806.1 477.8L810.0 477.0 M806.1 477.8L802.2 474.7 M812.2 496.3L816.0 496.0 M812.2 496.3L808.4 497.1 M812.2 496.3L812.5 491.3 M783.8 470.2L785.1 470.9 M783.8 470.2L784.7 468.6 M783.8 470.2L786.0 466.5 M773.6 507.8L772.0 508.0 M773.6 507.8L776.0 518.0 M773.6 507.8L770.0 498.0 M790.3 474.7L785.1 470.9 M790.3 474.7L783.8 470.2 M790.3 474.7L784.7 468.6 M784.3 506.2L789.5 507.8 M784.3 506.2L788.2 497.8 M784.3 506.2L787.2 496.8 M806.4 483.9L801.6 482.4 M806.4 483.9L806.1 477.8 M806.4 483.9L810.0 477.0 M785.1 470.9L783.8 470.2 M785.1 470.9L784.7 468.6 M785.1 470.9L786.0 466.5 M779.3 487.8L781.4 494.8 M779.3 487.8L782.5 479.0 M779.3 487.8L769.5 488.0 M776.0 518.0L773.6 507.8 M776.0 518.0L772.0 508.0 M776.0 518.0L784.3 506.2 M772.0 508.0L773.6 507.8 M772.0 508.0L770.0 498.0 M772.0 508.0L776.0 518.0 M770.0 498.0L769.5 488.0 M770.0 498.0L772.0 508.0 M770.0 498.0L773.6 507.8 M769.5 488.0L770.5 479.0 M769.5 488.0L779.3 487.8 M769.5 488.0L770.0 498.0 M770.5 479.0L776.1 478.1 M770.5 479.0L774.0 472.0 M770.5 479.0L769.5 488.0 M774.0 472.0L779.0 468.0 M774.0 472.0L776.1 478.1 M774.0 472.0L770.5 479.0 M779.0 468.0L783.8 470.2 M779.0 468.0L784.7 468.6 M779.0 468.0L774.0 472.0 M786.0 466.5L784.7 468.6 M786.0 466.5L783.8 470.2 M786.0 466.5L785.1 470.9 M795.0 467.0L801.5 470.3 M795.0 467.0L803.0 471.0 M795.0 467.0L790.3 474.7 M803.0 471.0L801.5 470.3 M803.0 471.0L802.2 474.7 M803.0 471.0L803.9 475.3 M810.0 477.0L806.1 477.8 M810.0 477.0L803.9 475.3 M810.0 477.0L806.4 483.9 M815.0 484.0L814.0 491.1 M815.0 484.0L812.5 491.3 M815.0 484.0L819.0 491.0 M819.0 491.0L814.0 491.1 M819.0 491.0L816.0 496.0 M819.0 491.0L821.0 497.0 M821.0 497.0L816.0 496.0 M821.0 497.0L819.0 491.0 M821.0 497.0L812.2 496.3" stroke="#3ecf3e" stroke-width="0.9" fill="none"/><polyline points="776.0,518.0 772.0,508.0 770.0,498.0 769.5,488.0 770.5,479.0 774.0,472.0 779.0,468.0 786.0,466.5 795.0,467.0 803.0,471.0 810.0,477.0 815.0,484.0 819.0,491.0 821.0,497.0" fill="none" stroke="#000" stroke-width="1.1" stroke-linejoin="round"/><polyline points="776.0,518.0 850.0,481.0 975.0,419.0 1156.0,322.0 1294.0,250.0 1434.0,176.0 1477.0,152.0" fill="none" stroke="#000" stroke-width="1.3"/><polyline points="821.0,495.5 835.0,487.2 850.0,478.4 880.0,461.1 920.0,441.3 975.0,414.0 1156.0,317.0 1294.0,245.0 1434.0,171.0 1472.0,149.8" fill="none" stroke="#333" stroke-width="0.8" opacity="0.7"/><path d="M1448 135 Q1458 128 1466 134 Q1474 142 1477 152" fill="none" stroke="#000" stroke-width="1.3"/><path d="M799.0 489.0L804.0 489.0L805.0 501.0Z M819.0 480.0L824.0 480.0L825.0 492.0Z M846.0 466.5L851.0 466.5L852.0 478.5Z M874.9 452.1L879.9 452.1L880.9 464.1Z M903.8 437.8L908.8 437.8L909.8 449.8Z M932.7 423.5L937.7 423.5L938.7 435.5Z M961.6 409.1L966.6 409.1L967.6 421.1Z M990.5 394.4L995.5 394.4L996.5 406.4Z M1019.4 379.0L1024.4 379.0L1025.4 391.0Z M1048.3 363.5L1053.3 363.5L1054.3 375.5Z M1077.2 348.0L1082.2 348.0L1083.2 360.0Z M1106.1 332.5L1111.1 332.5L1112.1 344.5Z M1135.0 317.0L1140.0 317.0L1141.0 329.0Z M1163.9 301.5L1168.9 301.5L1169.9 313.5Z M1192.8 286.5L1197.8 286.5L1198.8 298.5Z M1221.7 271.4L1226.7 271.4L1227.7 283.4Z M1250.6 256.3L1255.6 256.3L1256.6 268.3Z M1279.5 241.2L1284.5 241.2L1285.5 253.2Z M1308.4 226.1L1313.4 226.1L1314.4 238.1Z M1337.3 210.8L1342.3 210.8L1343.3 222.8Z M1366.2 195.5L1371.2 195.5L1372.2 207.5Z M1395.1 180.3L1400.1 180.3L1401.1 192.3Z M1424.0 165.0L1429.0 165.0L1430.0 177.0Z M1452.9 149.4L1457.9 149.4L1458.9 161.4Z" fill="#902030" opacity="0.4"/><path d="M779.0 482.0L789.0 501.0M791.5 507.0L792.5 509.0 M799.0 473.0L809.0 492.0M811.5 498.0L812.5 500.0 M826.0 459.5L836.0 478.5M838.5 484.5L839.5 486.5 M854.9 445.1L864.9 464.1M867.4 470.1L868.4 472.1 M883.8 430.8L893.8 449.8M896.3 455.8L897.3 457.8 M912.7 416.5L922.7 435.5M925.2 441.5L926.2 443.5 M941.6 402.1L951.6 421.1M954.1 427.1L955.1 429.1 M970.5 387.4L980.5 406.4M983.0 412.4L984.0 414.4 M999.4 372.0L1009.4 391.0M1011.9 397.0L1012.9 399.0 M1028.3 356.5L1038.3 375.5M1040.8 381.5L1041.8 383.5 M1057.2 341.0L1067.2 360.0M1069.7 366.0L1070.7 368.0 M1086.1 325.5L1096.1 344.5M1098.6 350.5L1099.6 352.5 M1115.0 310.0L1125.0 329.0M1127.5 335.0L1128.5 337.0 M1143.9 294.5L1153.9 313.5M1156.4 319.5L1157.4 321.5 M1172.8 279.5L1182.8 298.5M1185.3 304.5L1186.3 306.5 M1201.7 264.4L1211.7 283.4M1214.2 289.4L1215.2 291.4 M1230.6 249.3L1240.6 268.3M1243.1 274.3L1244.1 276.3 M1259.5 234.2L1269.5 253.2M1272.0 259.2L1273.0 261.2 M1288.4 219.1L1298.4 238.1M1300.9 244.1L1301.9 246.1 M1317.3 203.8L1327.3 222.8M1329.8 228.8L1330.8 230.8 M1346.2 188.5L1356.2 207.5M1358.7 213.5L1359.7 215.5 M1375.1 173.3L1385.1 192.3M1387.6 198.3L1388.6 200.3 M1404.0 158.0L1414.0 177.0M1416.5 183.0L1417.5 185.0 M1432.9 142.4L1442.9 161.4M1445.4 167.4L1446.4 169.4 M1461.8 126.2L1471.8 145.2M1474.3 151.2L1475.3 153.2" stroke="#ff0000" stroke-width="1" fill="none"/><defs><linearGradient id="dg" x1="0" y1="0" x2="1" y2="0"><stop offset="0" stop-color="#a04040"/><stop offset="0.6" stop-color="#300000"/><stop offset="1" stop-color="#e00000"/></linearGradient></defs><path d="M786.5 497.0L791.0 496.5L792.3 509.0Z M806.5 488.0L811.0 487.5L812.3 500.0Z M833.5 474.5L838.0 474.0L839.3 486.5Z M862.4 460.1L866.9 459.6L868.2 472.1Z M891.3 445.8L895.8 445.3L897.1 457.8Z M920.2 431.5L924.7 431.0L926.0 443.5Z M949.1 417.1L953.6 416.6L954.9 429.1Z M978.0 402.4L982.5 401.9L983.8 414.4Z M1006.9 387.0L1011.4 386.5L1012.7 399.0Z M1035.8 371.5L1040.3 371.0L1041.6 383.5Z M1064.7 356.0L1069.2 355.5L1070.5 368.0Z M1093.6 340.5L1098.1 340.0L1099.4 352.5Z M1122.5 325.0L1127.0 324.5L1128.3 337.0Z M1151.4 309.5L1155.9 309.0L1157.2 321.5Z M1180.3 294.5L1184.8 294.0L1186.1 306.5Z M1209.2 279.4L1213.7 278.9L1215.0 291.4Z M1238.1 264.3L1242.6 263.8L1243.9 276.3Z M1267.0 249.2L1271.5 248.7L1272.8 261.2Z M1295.9 234.1L1300.4 233.6L1301.7 246.1Z M1324.8 218.8L1329.3 218.3L1330.6 230.8Z M1353.7 203.5L1358.2 203.0L1359.5 215.5Z M1382.6 188.3L1387.1 187.8L1388.4 200.3Z M1411.5 173.0L1416.0 172.5L1417.3 185.0Z M1440.4 157.4L1444.9 156.9L1446.2 169.4Z M1469.3 141.2L1473.8 140.7L1475.1 153.2Z" fill="#3c0000" stroke="#8a1010" stroke-width="0.7"/><path d="M792.5 510.0L794.5 521.5L801.5 519.0Z M802.5 503.5L804.5 515.0L811.5 512.5Z M812.5 501.0L814.5 512.5L821.5 510.0Z M822.5 494.5L824.5 506.0L831.5 503.5Z M839.5 487.5L841.5 499.0L848.5 496.5Z M849.5 481.0L851.5 492.5L858.5 490.0Z M868.4 473.1L870.4 484.6L877.4 482.1Z M878.4 466.6L880.4 478.1L887.4 475.6Z M897.3 458.8L899.3 470.3L906.3 467.8Z M907.3 452.3L909.3 463.8L916.3 461.3Z M926.2 444.5L928.2 456.0L935.2 453.5Z M936.2 438.0L938.2 449.5L945.2 447.0Z M955.1 430.1L957.1 441.6L964.1 439.1Z M965.1 423.6L967.1 435.1L974.1 432.6Z M984.0 415.4L986.0 426.9L993.0 424.4Z M994.0 408.9L996.0 420.4L1003.0 417.9Z M1012.9 400.0L1014.9 411.5L1021.9 409.0Z M1022.9 393.5L1024.9 405.0L1031.9 402.5Z M1041.8 384.5L1043.8 396.0L1050.8 393.5Z M1051.8 378.0L1053.8 389.5L1060.8 387.0Z M1070.7 369.0L1072.7 380.5L1079.7 378.0Z M1080.7 362.5L1082.7 374.0L1089.7 371.5Z M1099.6 353.5L1101.6 365.0L1108.6 362.5Z M1109.6 347.0L1111.6 358.5L1118.6 356.0Z M1128.5 338.0L1130.5 349.5L1137.5 347.0Z M1138.5 331.5L1140.5 343.0L1147.5 340.5Z M1157.4 322.5L1159.4 334.0L1166.4 331.5Z M1167.4 316.0L1169.4 327.5L1176.4 325.0Z M1186.3 307.5L1188.3 319.0L1195.3 316.5Z M1196.3 301.0L1198.3 312.5L1205.3 310.0Z M1215.2 292.4L1217.2 303.9L1224.2 301.4Z M1225.2 285.9L1227.2 297.4L1234.2 294.9Z M1244.1 277.3L1246.1 288.8L1253.1 286.3Z M1254.1 270.8L1256.1 282.3L1263.1 279.8Z M1273.0 262.2L1275.0 273.7L1282.0 271.2Z M1283.0 255.7L1285.0 267.2L1292.0 264.7Z M1301.9 247.1L1303.9 258.6L1310.9 256.1Z M1311.9 240.6L1313.9 252.1L1320.9 249.6Z M1330.8 231.8L1332.8 243.3L1339.8 240.8Z M1340.8 225.3L1342.8 236.8L1349.8 234.3Z M1359.7 216.5L1361.7 228.0L1368.7 225.5Z M1369.7 210.0L1371.7 221.5L1378.7 219.0Z M1388.6 201.3L1390.6 212.8L1397.6 210.3Z M1398.6 194.8L1400.6 206.3L1407.6 203.8Z M1417.5 186.0L1419.5 197.5L1426.5 195.0Z M1427.5 179.5L1429.5 191.0L1436.5 188.5Z M1446.4 170.4L1448.4 181.9L1455.4 179.4Z M1456.4 163.9L1458.4 175.4L1465.4 172.9Z M1475.3 154.2L1477.3 165.7L1484.3 163.2Z M1485.3 147.7L1487.3 159.2L1494.3 156.7Z" fill="none" stroke="#ff0000" stroke-width="1" stroke-linejoin="miter"/><path d="M799.4 522.9L809.7 543.4 M809.4 516.4L819.7 536.9 M819.4 513.9L829.7 534.4 M829.4 507.4L839.7 527.9 M846.4 500.4L856.7 520.9 M856.4 493.9L866.7 514.4 M875.2 486.0L885.6 506.5 M885.2 479.5L895.6 500.0 M904.1 471.7L914.5 492.2 M914.1 465.2L924.5 485.7 M933.1 457.4L943.4 477.8 M943.1 450.9L953.4 471.3 M962.0 443.0L972.3 463.5 M972.0 436.5L982.3 457.0 M990.9 428.4L1001.2 448.8 M1000.9 421.9L1011.2 442.3 M1019.8 412.9L1030.1 433.3 M1029.8 406.4L1040.1 426.8 M1048.6 397.4L1059.0 417.9 M1058.6 390.9L1069.0 411.4 M1077.5 381.9L1087.9 402.4 M1087.5 375.4L1097.9 395.9 M1106.4 366.4L1116.8 386.9 M1116.4 359.9L1126.8 380.4 M1135.3 350.9L1145.7 371.4 M1145.3 344.4L1155.7 364.9 M1164.2 335.5L1174.6 355.9 M1174.2 329.0L1184.6 349.4 M1193.1 320.4L1203.5 340.8 M1203.1 313.9L1213.5 334.3 M1222.0 305.3L1232.4 325.8 M1232.0 298.8L1242.4 319.3 M1250.9 290.2L1261.3 310.7 M1260.9 283.7L1271.3 304.2 M1279.8 275.1L1290.2 295.6 M1289.8 268.6L1300.2 289.1 M1308.8 260.0L1319.1 280.5 M1318.8 253.5L1329.1 274.0 M1337.6 244.7L1348.0 265.2 M1347.6 238.2L1358.0 258.7 M1366.5 229.5L1376.9 249.9 M1376.5 223.0L1386.9 243.4 M1395.4 214.2L1405.8 234.7 M1405.4 207.7L1415.8 228.2 M1424.3 198.9L1434.7 219.4 M1434.3 192.4L1444.7 212.9 M1453.2 183.3L1463.6 203.7 M1463.2 176.8L1473.6 197.2 M1482.1 167.1L1492.5 187.6 M1492.1 160.6L1502.5 181.1" stroke="#ff0000" stroke-width="1" stroke-dasharray="2.5 3.5" fill="none"/><polyline points="821.0,495.5 835.0,487.2 850.0,478.4 880.0,461.1 920.0,441.3 975.0,414.0 1156.0,317.0 1294.0,245.0 1434.0,171.0 1472.0,149.8" fill="none" stroke="#3a3a3a" stroke-width="0.9"/><path d="M956 430L959 428L960 437L957.5 438Z" fill="#e8c840"/><line x1="777" y1="471" x2="735.4" y2="491.4" stroke="#1010ff" stroke-width="1.2"/><polygon points="730,494 737.7,484.7 742.1,493.7" fill="#1010ff"/><polygon points="773.7,466.5 778.5,476.4 767.8,477.2 766.5,474.5" fill="#1414f0"/><line x1="771" y1="496" x2="729.2" y2="520.9" stroke="#1010ff" stroke-width="1.2"/><polygon points="724,524 730.9,514.1 736.0,522.7" fill="#1010ff"/><polygon points="767.3,491.8 773.0,501.2 762.3,502.9 760.8,500.3" fill="#1414f0"/><line x1="780" y1="517" x2="748.3" y2="534.1" stroke="#1010ff" stroke-width="1.2"/><polygon points="743,537 750.3,527.4 755.1,536.2" fill="#1010ff"/><polygon points="776.5,512.6 781.7,522.3 771.0,523.6 769.6,520.9" fill="#1414f0"/><line x1="800" y1="478" x2="775.3" y2="491.2" stroke="#1010ff" stroke-width="1.2"/><polygon points="796.5,473.6 801.7,483.3 791.0,484.5 789.6,481.9" fill="#1414f0"/><line x1="806" y1="500" x2="785.2" y2="512.0" stroke="#1010ff" stroke-width="1.2"/><polygon points="802.4,495.7 807.9,505.3 797.2,506.8 795.7,504.2" fill="#1414f0"/><line x1="1468" y1="135" x2="1507.7" y2="114.7" stroke="#1010ff" stroke-width="1.2"/><polygon points="1513,112 1505.5,121.5 1500.9,112.6" fill="#1010ff"/><polygon points="1471.4,139.4 1466.4,129.6 1477.1,128.7 1478.5,131.3" fill="#1414f0"/><line x1="1472" y1="132" x2="1485.8" y2="124.0" stroke="#1010ff" stroke-width="1.2"/><polygon points="1491,121 1484.0,130.8 1479.0,122.2" fill="#1010ff"/><line x1="1477" y1="152" x2="1504.7" y2="136.9" stroke="#1010ff" stroke-width="1.2"/><polygon points="1510,134 1502.7,143.7 1497.9,134.9" fill="#1010ff"/></svg><!--/MODEL-->


<!-- scale bar -->
<div class="sc" style="left:974px;top:534px">0</div>
<div class="sc" style="left:1114px;top:534px">0.01</div>
<div class="sc" style="left:1251px;top:534px">0.02</div>
<div class="sc" style="left:1283px;top:534px">(m)</div>
<div class="sc" style="left:1036px;top:564px">0.005</div>
<div class="sc" style="left:1186px;top:564px">0.015</div>
<div class="a" style="left:978px;top:550px;width:300px;height:11px;border:1px solid #000;background:#fff"></div>
<div class="a" style="left:978px;top:550px;width:75px;height:11px;background:#000"></div>
<div class="a" style="left:1127px;top:550px;width:75px;height:11px;background:#000"></div>
<!-- triad -->
<svg class="a" style="left:1575px;top:485px" width="80" height="75" viewBox="1575 485 80 75">
 <line x1="1604" y1="545" x2="1632" y2="531" stroke="#00a000" stroke-width="2"/>
 <polygon points="1633,530 1622,531 1626,538" fill="#009000"/>
 <line x1="1604" y1="545" x2="1590" y2="551" stroke="#000060" stroke-width="2.2"/>
 <circle cx="1590" cy="552" r="3" fill="#1010ff"/>
 <line x1="1604" y1="545" x2="1591" y2="517" stroke="#e00000" stroke-width="2"/>
 <polygon points="1588,512 1586,523 1594,520" fill="#e00000"/>
 <circle cx="1600" cy="524" r="3" fill="#20d0e0"/>
 <text x="1585" y="503" font-family="Liberation Sans" font-size="12" fill="#ff2020">X</text>
 <text x="1639" y="526" font-family="Liberation Sans" font-size="12" fill="#20a020">Y</text>
 <text x="1582" y="553" font-family="Liberation Sans" font-size="12" fill="#2020ff">Z</text>
</svg>
<!-- network widget -->
<div class="a" style="left:1655px;top:73px;width:10px;height:16px;border-radius:8px;background:#e0b000"></div>
<div class="a" style="left:1542px;top:42px;width:120px;height:51px;border-radius:26px;background:#fff;box-shadow:0 3px 5px rgba(40,50,90,0.45)"></div>
<svg class="a" style="left:1548px;top:49px" width="40" height="40" viewBox="0 0 40 40">
 <circle cx="19" cy="19" r="19" fill="#29c66f"/>
 <path d="M6.5 15.5 A18 18 0 0 1 31.5 15.5" stroke="#fff" stroke-width="2.6" fill="none" stroke-linecap="round"/>
 <path d="M10.5 20 A12 12 0 0 1 27.5 20" stroke="#fff" stroke-width="2.6" fill="none" stroke-linecap="round"/>
 <path d="M14.5 24.5 A6.5 6.5 0 0 1 23.5 24.5" stroke="#fff" stroke-width="2.6" fill="none" stroke-linecap="round"/>
 <circle cx="19" cy="29" r="1.8" fill="#fff"/>
</svg>
<svg class="a" style="left:1590px;top:50px" width="14" height="36" viewBox="0 0 14 36">
 <path d="M4.5 2 V13 M1.5 10 L4.5 13" stroke="#22b060" stroke-width="1.6" fill="none"/>
 <path d="M8 13 V2 L11 5" stroke="#f06010" stroke-width="1.8" fill="none"/>
 <rect x="3" y="24" width="7.5" height="10" fill="#fff" stroke="#22c060" stroke-width="1.4"/>
 <rect x="3" y="29" width="7.5" height="5" fill="#22c060"/>
 <rect x="3.5" y="21.5" width="1.5" height="3" fill="#22c060"/>
</svg>
<div class="t" style="left:1607px;top:51px;font-size:11px;color:#555a70">0.00K/s</div>
<div class="t" style="left:1607px;top:71px;font-size:11px;color:#555a70">1</div>

<!-- message panel -->
<div class="a" style="left:587px;top:601px;width:1081px;height:139px;border:1px solid #898c95;border-bottom:none;background:#fff;overflow:hidden">
<div class="a" style="left:1px;top:19px;width:1077px;height:29px;background:#ededed"></div>
<div class="msg" style="left:25px;top:3px;color:#0000e6;font-size:10.8px;transform:scaleX(1.0);transform-origin:0 0">In Analysis 'Flow Analysis 1' - Analysis Type - External Solver Coupling: The specified Mechanical Input File could not be opened. Please check that the file path is correct and the file exists.</div>
<div class="msg" style="left:25px;top:20px;color:#000;font-size:10.8px;transform:scaleX(1.0105);transform-origin:0 0">In Analysis 'Flow Analysis 1' - Analysis Type: The specified Mechanical Input File 'C:\Users\Administrator\Desktop\xueguan\test1\fsi_inner3.inp' can not be found or does not contain any valid interfaces. Specify an input file</div>
<div class="msg" style="left:25px;top:34px;color:#000;font-size:10.8px;transform:scaleX(1.0);transform-origin:0 0">with valid interfaces, update the file location if it has moved or set the External Solver Coupling option to 'ANSYS MultiField via Prep7'.</div>
<div class="msg" style="left:25px;top:50px;color:#0000e6;font-size:10.8px;transform:scaleX(1.0067);transform-origin:0 0">In Analysis 'Flow Analysis 1': Unit conversions will not be applied to data transferred between the solvers. To enable these conversions, select a pre-defined system of solution units for the ANSYS solver using the /UNITS</div>
<div class="msg" style="left:25px;top:64px;color:#0000e6;font-size:10.8px;transform:scaleX(1.033);transform-origin:0 0">command in the Input File.</div>
<div class="msg" style="left:25px;top:80px;color:#0000e6;font-size:10.8px;transform:scaleX(0.990);transform-origin:0 0">The 'Mechanical Input File' set in 'Flow Analysis 1' was originally set via a data link in Workbench but has subsequently been modified within CFX-Pre. The analysis will use the Mechanical Input File shown in CFX-Pre, but the</div>
<div class="msg" style="left:25px;top:94px;color:#0000e6;font-size:10.8px;transform:scaleX(1.0133);transform-origin:0 0">may not be updated automatically following modifications to the Mechanical setup or the project location. If this is not desired then you should delete and re-create the data link in Workbench.</div>
<svg class="a" style="left:0;top:0" width="30" height="139">
 <g id="warn"><path d="M12.5 4.5 L19 16.5 L6 16.5 Z" fill="#ffff00" stroke="#6b6b00" stroke-width="1" stroke-linejoin="round"/><path d="M12.5 8 L12.5 12.5" stroke="#000" stroke-width="2"/><rect x="11.5" y="13.5" width="2" height="1.6" fill="#000"/></g>
 <use href="#warn" y="60"/><use href="#warn" y="90"/>
 <circle cx="12.5" cy="35" r="6.5" fill="#c8243c"/><path d="M9.5 32 L15.5 38 M15.5 32 L9.5 38" stroke="#fff" stroke-width="2.2"/>
</svg>
</div>

</body></html>
